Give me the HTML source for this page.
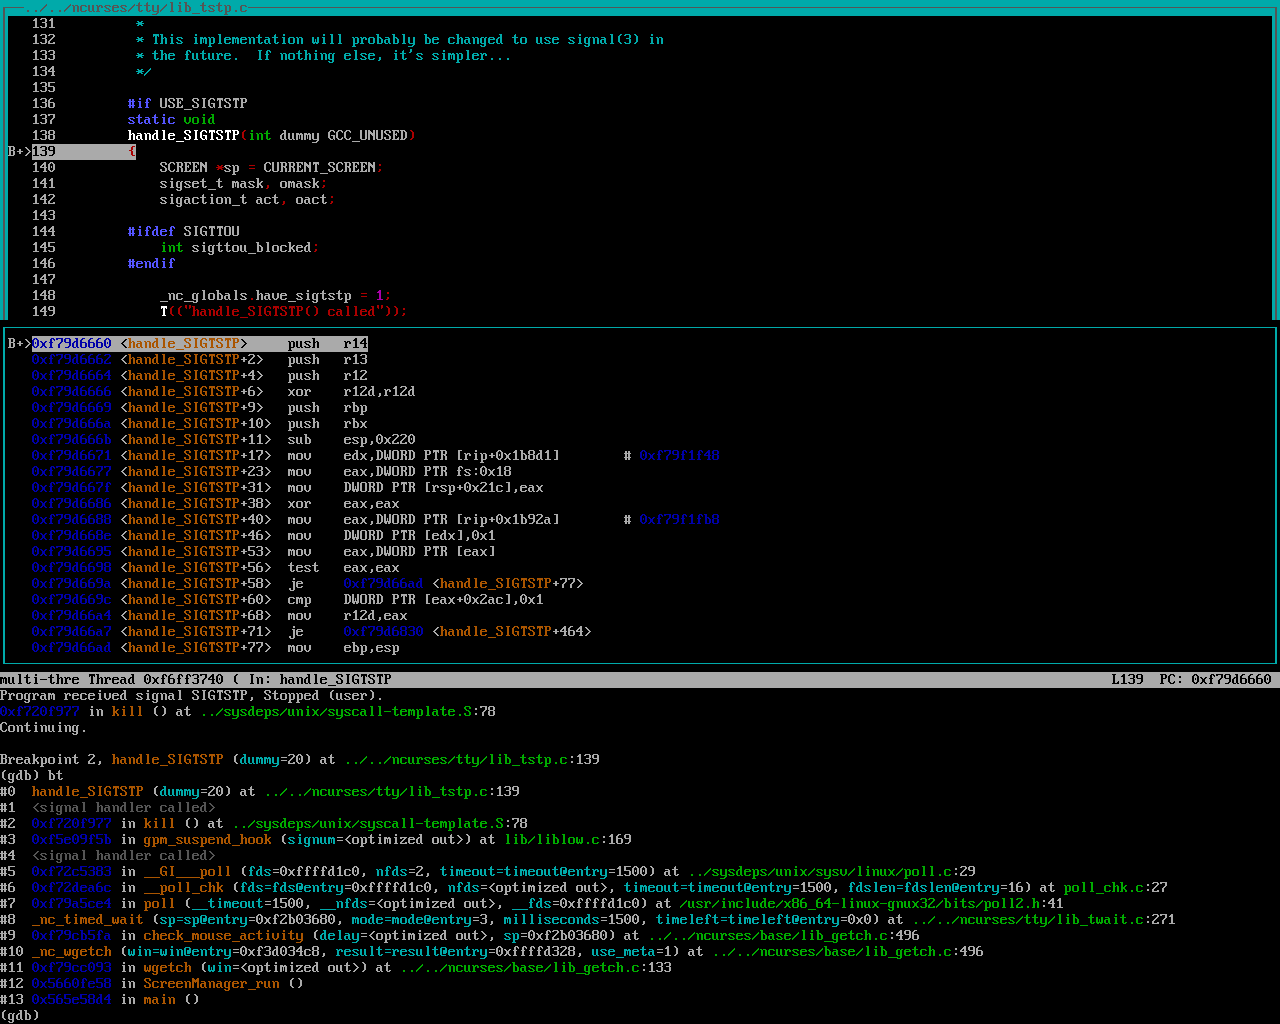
<!DOCTYPE html>
<html lang="en"><head><meta charset="utf-8"><title>gdb TUI - ../../ncurses/tty/lib_tstp.c</title>
<style>
html,body{margin:0;padding:0;background:#000;}
body{width:1280px;height:1024px;overflow:hidden;}
#screen{position:relative;width:1280px;height:1024px;overflow:hidden;background:#000;}
#text{position:absolute;left:0;top:0;margin:0;width:1280px;height:1024px;overflow:hidden;font-family:"Liberation Mono",monospace;font-size:13.333px;line-height:16px;color:#aaa;letter-spacing:0;}
#text div{height:16px;white-space:pre;overflow:hidden;}
#glyphs{position:absolute;left:0;top:0;display:block;}
.fk{color:#000000}.bk{background:#000000}
.fr{color:#aa0000}.br{background:#aa0000}
.fg{color:#00aa00}.bg{background:#00aa00}
.fo{color:#aa5500}.bo{background:#aa5500}
.fb{color:#0000aa}.bb{background:#0000aa}
.fm{color:#aa00aa}.bm{background:#aa00aa}
.fc{color:#00aaaa}.bc{background:#00aaaa}
.fw{color:#aaaaaa}.bw{background:#aaaaaa}
.fK{color:#555555}.bK{background:#555555}
.fR{color:#ff5555}.bR{background:#ff5555}
.fG{color:#55ff55}.bG{background:#55ff55}
.fY{color:#ffff55}.bY{background:#ffff55}
.fB{color:#5555ff}.bB{background:#5555ff}
.fM{color:#ff55ff}.bM{background:#ff55ff}
.fC{color:#55ffff}.bC{background:#55ffff}
.fW{color:#ffffff}.bW{background:#ffffff}
</style></head><body>
<div id="screen">
<div id="text">
<div><span class="fK bc">┌──../../ncurses/tty/lib_tstp.c────────────────────────────────────────────────────────────────────────────────────────────────────────────────────────────────┐</span></div>
<div><span class="fK bc">│</span>   131         <span class="fc"> *</span>                                                                                                                                             <span class="fK bc">│</span></div>
<div><span class="fK bc">│</span>   132         <span class="fc"> * This implementation will probably be changed to use signal(3) in</span>                                                                            <span class="fK bc">│</span></div>
<div><span class="fK bc">│</span>   133         <span class="fc"> * the future.  If nothing else, it's simpler...</span>                                                                                               <span class="fK bc">│</span></div>
<div><span class="fK bc">│</span>   134         <span class="fc"> */</span>                                                                                                                                            <span class="fK bc">│</span></div>
<div><span class="fK bc">│</span>   135                                                                                                                                                        <span class="fK bc">│</span></div>
<div><span class="fK bc">│</span>   136         <span class="fB">#if</span> USE_SIGTSTP                                                                                                                                <span class="fK bc">│</span></div>
<div><span class="fK bc">│</span>   137         <span class="fB">static</span> <span class="fg">void</span>                                                                                                                                    <span class="fK bc">│</span></div>
<div><span class="fK bc">│</span>   138         <span class="fW">handle_SIGTSTP</span><span class="fr">(</span><span class="fg">int</span> dummy GCC_UNUSED<span class="fr">)</span>                                                                                                           <span class="fK bc">│</span></div>
<div><span class="fK bc">│</span>B+&gt;<span class="fk bw">139         </span><span class="fr bw">{</span>                                                                                                                                              <span class="fK bc">│</span></div>
<div><span class="fK bc">│</span>   140             SCREEN <span class="fr">*</span>sp <span class="fr">=</span> CURRENT_SCREEN<span class="fr">;</span>                                                                                                               <span class="fK bc">│</span></div>
<div><span class="fK bc">│</span>   141             sigset_t mask<span class="fr">,</span> omask<span class="fr">;</span>                                                                                                                      <span class="fK bc">│</span></div>
<div><span class="fK bc">│</span>   142             sigaction_t act<span class="fr">,</span> oact<span class="fr">;</span>                                                                                                                     <span class="fK bc">│</span></div>
<div><span class="fK bc">│</span>   143                                                                                                                                                        <span class="fK bc">│</span></div>
<div><span class="fK bc">│</span>   144         <span class="fB">#ifdef</span> SIGTTOU                                                                                                                                 <span class="fK bc">│</span></div>
<div><span class="fK bc">│</span>   145             <span class="fg">int</span> sigttou_blocked<span class="fr">;</span>                                                                                                                       <span class="fK bc">│</span></div>
<div><span class="fK bc">│</span>   146         <span class="fB">#endif</span>                                                                                                                                         <span class="fK bc">│</span></div>
<div><span class="fK bc">│</span>   147                                                                                                                                                        <span class="fK bc">│</span></div>
<div><span class="fK bc">│</span>   148             _nc_globals<span class="fr">.</span>have_sigtstp <span class="fr">=</span> <span class="fm">1</span><span class="fr">;</span>                                                                                                              <span class="fK bc">│</span></div>
<div><span class="fK bc">│</span>   149             <span class="fW">T</span><span class="fr">(("handle_SIGTSTP() called"));</span>                                                                                                            <span class="fK bc">│</span></div>
<div><span class="fc">┌──────────────────────────────────────────────────────────────────────────────────────────────────────────────────────────────────────────────────────────────┐</span></div>
<div><span class="fc">│</span>B+&gt;<span class="fb bw">0xf79d6660</span><span class="fk bw"> &lt;</span><span class="fo bw">handle_SIGTSTP</span><span class="fk bw">&gt;     push   r14</span>                                                                                                                 <span class="fc">│</span></div>
<div><span class="fc">│</span>   <span class="fb">0xf79d6662</span> &lt;<span class="fo">handle_SIGTSTP</span>+2&gt;   push   r13                                                                                                                 <span class="fc">│</span></div>
<div><span class="fc">│</span>   <span class="fb">0xf79d6664</span> &lt;<span class="fo">handle_SIGTSTP</span>+4&gt;   push   r12                                                                                                                 <span class="fc">│</span></div>
<div><span class="fc">│</span>   <span class="fb">0xf79d6666</span> &lt;<span class="fo">handle_SIGTSTP</span>+6&gt;   xor    r12d,r12d                                                                                                           <span class="fc">│</span></div>
<div><span class="fc">│</span>   <span class="fb">0xf79d6669</span> &lt;<span class="fo">handle_SIGTSTP</span>+9&gt;   push   rbp                                                                                                                 <span class="fc">│</span></div>
<div><span class="fc">│</span>   <span class="fb">0xf79d666a</span> &lt;<span class="fo">handle_SIGTSTP</span>+10&gt;  push   rbx                                                                                                                 <span class="fc">│</span></div>
<div><span class="fc">│</span>   <span class="fb">0xf79d666b</span> &lt;<span class="fo">handle_SIGTSTP</span>+11&gt;  sub    esp,0x220                                                                                                           <span class="fc">│</span></div>
<div><span class="fc">│</span>   <span class="fb">0xf79d6671</span> &lt;<span class="fo">handle_SIGTSTP</span>+17&gt;  mov    edx,DWORD PTR [rip+0x1b8d1]        # <span class="fb">0xf79f1f48</span>                                                                     <span class="fc">│</span></div>
<div><span class="fc">│</span>   <span class="fb">0xf79d6677</span> &lt;<span class="fo">handle_SIGTSTP</span>+23&gt;  mov    eax,DWORD PTR fs:0x18                                                                                               <span class="fc">│</span></div>
<div><span class="fc">│</span>   <span class="fb">0xf79d667f</span> &lt;<span class="fo">handle_SIGTSTP</span>+31&gt;  mov    DWORD PTR [rsp+0x21c],eax                                                                                           <span class="fc">│</span></div>
<div><span class="fc">│</span>   <span class="fb">0xf79d6686</span> &lt;<span class="fo">handle_SIGTSTP</span>+38&gt;  xor    eax,eax                                                                                                             <span class="fc">│</span></div>
<div><span class="fc">│</span>   <span class="fb">0xf79d6688</span> &lt;<span class="fo">handle_SIGTSTP</span>+40&gt;  mov    eax,DWORD PTR [rip+0x1b92a]        # <span class="fb">0xf79f1fb8</span>                                                                     <span class="fc">│</span></div>
<div><span class="fc">│</span>   <span class="fb">0xf79d668e</span> &lt;<span class="fo">handle_SIGTSTP</span>+46&gt;  mov    DWORD PTR [edx],0x1                                                                                                 <span class="fc">│</span></div>
<div><span class="fc">│</span>   <span class="fb">0xf79d6695</span> &lt;<span class="fo">handle_SIGTSTP</span>+53&gt;  mov    eax,DWORD PTR [eax]                                                                                                 <span class="fc">│</span></div>
<div><span class="fc">│</span>   <span class="fb">0xf79d6698</span> &lt;<span class="fo">handle_SIGTSTP</span>+56&gt;  test   eax,eax                                                                                                             <span class="fc">│</span></div>
<div><span class="fc">│</span>   <span class="fb">0xf79d669a</span> &lt;<span class="fo">handle_SIGTSTP</span>+58&gt;  je     <span class="fb">0xf79d66ad</span> &lt;<span class="fo">handle_SIGTSTP</span>+77&gt;                                                                                      <span class="fc">│</span></div>
<div><span class="fc">│</span>   <span class="fb">0xf79d669c</span> &lt;<span class="fo">handle_SIGTSTP</span>+60&gt;  cmp    DWORD PTR [eax+0x2ac],0x1                                                                                           <span class="fc">│</span></div>
<div><span class="fc">│</span>   <span class="fb">0xf79d66a4</span> &lt;<span class="fo">handle_SIGTSTP</span>+68&gt;  mov    r12d,eax                                                                                                            <span class="fc">│</span></div>
<div><span class="fc">│</span>   <span class="fb">0xf79d66a7</span> &lt;<span class="fo">handle_SIGTSTP</span>+71&gt;  je     <span class="fb">0xf79d6830</span> &lt;<span class="fo">handle_SIGTSTP</span>+464&gt;                                                                                     <span class="fc">│</span></div>
<div><span class="fc">│</span>   <span class="fb">0xf79d66ad</span> &lt;<span class="fo">handle_SIGTSTP</span>+77&gt;  mov    ebp,esp                                                                                                             <span class="fc">│</span></div>
<div><span class="fc">└──────────────────────────────────────────────────────────────────────────────────────────────────────────────────────────────────────────────────────────────┘</span></div>
<div><span class="fk bw">multi-thre Thread 0xf6ff3740 ( In: handle_SIGTSTP                                                                                          L139  PC: 0xf79d6660 </span></div>
<div>Program received signal SIGTSTP, Stopped (user).</div>
<div><span class="fb">0xf720f977</span> in <span class="fo">kill</span> () at <span class="fg">../sysdeps/unix/syscall-template.S</span>:78</div>
<div>Continuing.</div>
<div></div>
<div>Breakpoint 2, <span class="fo">handle_SIGTSTP</span> (<span class="fc">dummy</span>=20) at <span class="fg">../../ncurses/tty/lib_tstp.c</span>:139</div>
<div>(gdb) bt</div>
<div>#0  <span class="fo">handle_SIGTSTP</span> (<span class="fc">dummy</span>=20) at <span class="fg">../../ncurses/tty/lib_tstp.c</span>:139</div>
<div>#1  <span class="fK">&lt;signal handler called&gt;</span></div>
<div>#2  <span class="fb">0xf720f977</span> in <span class="fo">kill</span> () at <span class="fg">../sysdeps/unix/syscall-template.S</span>:78</div>
<div>#3  <span class="fb">0xf5e09f5b</span> in <span class="fo">gpm_suspend_hook</span> (<span class="fc">signum</span>=&lt;optimized out&gt;) at <span class="fg">lib/liblow.c</span>:169</div>
<div>#4  <span class="fK">&lt;signal handler called&gt;</span></div>
<div>#5  <span class="fb">0xf72c5383</span> in <span class="fo">__GI___poll</span> (<span class="fc">fds</span>=0xffffd1c0, <span class="fc">nfds</span>=2, <span class="fc">timeout=timeout@entry</span>=1500) at <span class="fg">../sysdeps/unix/sysv/linux/poll.c</span>:29</div>
<div>#6  <span class="fb">0xf72dea6c</span> in <span class="fo">__poll_chk</span> (<span class="fc">fds=fds@entry</span>=0xffffd1c0, <span class="fc">nfds</span>=&lt;optimized out&gt;, <span class="fc">timeout=timeout@entry</span>=1500, <span class="fc">fdslen=fdslen@entry</span>=16) at <span class="fg">poll_chk.c</span>:27</div>
<div>#7  <span class="fb">0xf79a5ce4</span> in <span class="fo">poll</span> (<span class="fc">__timeout</span>=1500, <span class="fc">__nfds</span>=&lt;optimized out&gt;, <span class="fc">__fds</span>=0xffffd1c0) at <span class="fg">/usr/include/x86_64-linux-gnux32/bits/poll2.h</span>:41</div>
<div>#8  <span class="fo">_nc_timed_wait</span> (<span class="fc">sp=sp@entry</span>=0xf2b03680, <span class="fc">mode=mode@entry</span>=3, <span class="fc">milliseconds</span>=1500, <span class="fc">timeleft=timeleft@entry</span>=0x0) at <span class="fg">../../ncurses/tty/lib_twait.c</span>:271</div>
<div>#9  <span class="fb">0xf79cb5fa</span> in <span class="fo">check_mouse_activity</span> (<span class="fc">delay</span>=&lt;optimized out&gt;, <span class="fc">sp</span>=0xf2b03680) at <span class="fg">../../ncurses/base/lib_getch.c</span>:496</div>
<div>#10 <span class="fo">_nc_wgetch</span> (<span class="fc">win=win@entry</span>=0xf3d034c8, <span class="fc">result=result@entry</span>=0xffffd328, <span class="fc">use_meta</span>=1) at <span class="fg">../../ncurses/base/lib_getch.c</span>:496</div>
<div>#11 <span class="fb">0xf79cc093</span> in <span class="fo">wgetch</span> (<span class="fc">win</span>=&lt;optimized out&gt;) at <span class="fg">../../ncurses/base/lib_getch.c</span>:133</div>
<div>#12 <span class="fb">0x5660fe58</span> in <span class="fo">ScreenManager_run</span> ()</div>
<div>#13 <span class="fb">0x565e58d4</span> in <span class="fo">main</span> ()</div>
<div>(gdb)</div>
</div>
<svg id="glyphs" width="1280" height="1024" viewBox="0 0 1280 1024" shape-rendering="crispEdges">
<defs>
<path id="g22" d="M1 1h2v1h-2zM5 1h2v1h-2zM1 2h2v1h-2zM5 2h2v1h-2zM1 3h2v1h-2zM5 3h2v1h-2zM2 4h1v1h-1zM5 4h1v1h-1z"/>
<path id="g23" d="M1 3h2v1h-2zM4 3h2v1h-2zM1 4h2v1h-2zM4 4h2v1h-2zM0 5h7v1h-7zM1 6h2v1h-2zM4 6h2v1h-2zM1 7h2v1h-2zM4 7h2v1h-2zM1 8h2v1h-2zM4 8h2v1h-2zM0 9h7v1h-7zM1 10h2v1h-2zM4 10h2v1h-2zM1 11h2v1h-2zM4 11h2v1h-2z"/>
<path id="g27" d="M2 1h2v1h-2zM2 2h2v1h-2zM2 3h2v1h-2zM1 4h2v1h-2z"/>
<path id="g28" d="M4 2h2v1h-2zM3 3h2v1h-2zM2 4h2v1h-2zM2 5h2v1h-2zM2 6h2v1h-2zM2 7h2v1h-2zM2 8h2v1h-2zM2 9h2v1h-2zM3 10h2v1h-2zM4 11h2v1h-2z"/>
<path id="g29" d="M2 2h2v1h-2zM3 3h2v1h-2zM4 4h2v1h-2zM4 5h2v1h-2zM4 6h2v1h-2zM4 7h2v1h-2zM4 8h2v1h-2zM4 9h2v1h-2zM3 10h2v1h-2zM2 11h2v1h-2z"/>
<path id="g2a" d="M1 5h2v1h-2zM5 5h2v1h-2zM2 6h4v1h-4zM0 7h8v1h-8zM2 8h4v1h-4zM1 9h2v1h-2zM5 9h2v1h-2z"/>
<path id="g2b" d="M3 5h2v1h-2zM3 6h2v1h-2zM1 7h6v1h-6zM3 8h2v1h-2zM3 9h2v1h-2z"/>
<path id="g2c" d="M3 9h2v1h-2zM3 10h2v1h-2zM3 11h2v1h-2zM2 12h2v1h-2z"/>
<path id="g2d" d="M0 7h7v1h-7z"/>
<path id="g2e" d="M3 10h2v1h-2zM3 11h2v1h-2z"/>
<path id="g2f" d="M6 4h1v1h-1zM5 5h2v1h-2zM4 6h2v1h-2zM3 7h2v1h-2zM2 8h2v1h-2zM1 9h2v1h-2zM0 10h2v1h-2zM0 11h1v1h-1z"/>
<path id="g30" d="M2 2h3v1h-3zM1 3h2v1h-2zM4 3h2v1h-2zM0 4h2v1h-2zM5 4h2v1h-2zM0 5h2v1h-2zM5 5h2v1h-2zM0 6h2v1h-2zM3 6h1v1h-1zM5 6h2v1h-2zM0 7h2v1h-2zM3 7h1v1h-1zM5 7h2v1h-2zM0 8h2v1h-2zM5 8h2v1h-2zM0 9h2v1h-2zM5 9h2v1h-2zM1 10h2v1h-2zM4 10h2v1h-2zM2 11h3v1h-3z"/>
<path id="g31" d="M3 2h2v1h-2zM2 3h3v1h-3zM1 4h4v1h-4zM3 5h2v1h-2zM3 6h2v1h-2zM3 7h2v1h-2zM3 8h2v1h-2zM3 9h2v1h-2zM3 10h2v1h-2zM1 11h6v1h-6z"/>
<path id="g32" d="M1 2h5v1h-5zM0 3h2v1h-2zM5 3h2v1h-2zM5 4h2v1h-2zM4 5h2v1h-2zM3 6h2v1h-2zM2 7h2v1h-2zM1 8h2v1h-2zM0 9h2v1h-2zM0 10h2v1h-2zM5 10h2v1h-2zM0 11h7v1h-7z"/>
<path id="g33" d="M1 2h5v1h-5zM0 3h2v1h-2zM5 3h2v1h-2zM5 4h2v1h-2zM5 5h2v1h-2zM2 6h4v1h-4zM5 7h2v1h-2zM5 8h2v1h-2zM5 9h2v1h-2zM0 10h2v1h-2zM5 10h2v1h-2zM1 11h5v1h-5z"/>
<path id="g34" d="M4 2h2v1h-2zM3 3h3v1h-3zM2 4h4v1h-4zM1 5h2v1h-2zM4 5h2v1h-2zM0 6h2v1h-2zM4 6h2v1h-2zM0 7h7v1h-7zM4 8h2v1h-2zM4 9h2v1h-2zM4 10h2v1h-2zM3 11h4v1h-4z"/>
<path id="g35" d="M0 2h7v1h-7zM0 3h2v1h-2zM0 4h2v1h-2zM0 5h2v1h-2zM0 6h6v1h-6zM5 7h2v1h-2zM5 8h2v1h-2zM5 9h2v1h-2zM0 10h2v1h-2zM5 10h2v1h-2zM1 11h5v1h-5z"/>
<path id="g36" d="M2 2h3v1h-3zM1 3h2v1h-2zM0 4h2v1h-2zM0 5h2v1h-2zM0 6h6v1h-6zM0 7h2v1h-2zM5 7h2v1h-2zM0 8h2v1h-2zM5 8h2v1h-2zM0 9h2v1h-2zM5 9h2v1h-2zM0 10h2v1h-2zM5 10h2v1h-2zM1 11h5v1h-5z"/>
<path id="g37" d="M0 2h7v1h-7zM0 3h2v1h-2zM5 3h2v1h-2zM5 4h2v1h-2zM5 5h2v1h-2zM4 6h2v1h-2zM3 7h2v1h-2zM2 8h2v1h-2zM2 9h2v1h-2zM2 10h2v1h-2zM2 11h2v1h-2z"/>
<path id="g38" d="M1 2h5v1h-5zM0 3h2v1h-2zM5 3h2v1h-2zM0 4h2v1h-2zM5 4h2v1h-2zM0 5h2v1h-2zM5 5h2v1h-2zM1 6h5v1h-5zM0 7h2v1h-2zM5 7h2v1h-2zM0 8h2v1h-2zM5 8h2v1h-2zM0 9h2v1h-2zM5 9h2v1h-2zM0 10h2v1h-2zM5 10h2v1h-2zM1 11h5v1h-5z"/>
<path id="g39" d="M1 2h5v1h-5zM0 3h2v1h-2zM5 3h2v1h-2zM0 4h2v1h-2zM5 4h2v1h-2zM0 5h2v1h-2zM5 5h2v1h-2zM1 6h6v1h-6zM5 7h2v1h-2zM5 8h2v1h-2zM5 9h2v1h-2zM4 10h2v1h-2zM1 11h4v1h-4z"/>
<path id="g3a" d="M3 4h2v1h-2zM3 5h2v1h-2zM3 9h2v1h-2zM3 10h2v1h-2z"/>
<path id="g3b" d="M3 4h2v1h-2zM3 5h2v1h-2zM3 9h2v1h-2zM3 10h2v1h-2zM2 11h2v1h-2z"/>
<path id="g3c" d="M5 3h2v1h-2zM4 4h2v1h-2zM3 5h2v1h-2zM2 6h2v1h-2zM1 7h2v1h-2zM2 8h2v1h-2zM3 9h2v1h-2zM4 10h2v1h-2zM5 11h2v1h-2z"/>
<path id="g3d" d="M1 5h6v1h-6zM1 8h6v1h-6z"/>
<path id="g3e" d="M1 3h2v1h-2zM2 4h2v1h-2zM3 5h2v1h-2zM4 6h2v1h-2zM5 7h2v1h-2zM4 8h2v1h-2zM3 9h2v1h-2zM2 10h2v1h-2zM1 11h2v1h-2z"/>
<path id="g40" d="M1 3h5v1h-5zM0 4h2v1h-2zM5 4h2v1h-2zM0 5h2v1h-2zM5 5h2v1h-2zM0 6h2v1h-2zM3 6h4v1h-4zM0 7h2v1h-2zM3 7h4v1h-4zM0 8h2v1h-2zM3 8h4v1h-4zM0 9h2v1h-2zM3 9h3v1h-3zM0 10h2v1h-2zM1 11h5v1h-5z"/>
<path id="g42" d="M0 2h6v1h-6zM1 3h2v1h-2zM5 3h2v1h-2zM1 4h2v1h-2zM5 4h2v1h-2zM1 5h2v1h-2zM5 5h2v1h-2zM1 6h5v1h-5zM1 7h2v1h-2zM5 7h2v1h-2zM1 8h2v1h-2zM5 8h2v1h-2zM1 9h2v1h-2zM5 9h2v1h-2zM1 10h2v1h-2zM5 10h2v1h-2zM0 11h6v1h-6z"/>
<path id="g43" d="M2 2h4v1h-4zM1 3h2v1h-2zM5 3h2v1h-2zM0 4h2v1h-2zM6 4h1v1h-1zM0 5h2v1h-2zM0 6h2v1h-2zM0 7h2v1h-2zM0 8h2v1h-2zM0 9h2v1h-2zM6 9h1v1h-1zM1 10h2v1h-2zM5 10h2v1h-2zM2 11h4v1h-4z"/>
<path id="g44" d="M0 2h5v1h-5zM1 3h2v1h-2zM4 3h2v1h-2zM1 4h2v1h-2zM5 4h2v1h-2zM1 5h2v1h-2zM5 5h2v1h-2zM1 6h2v1h-2zM5 6h2v1h-2zM1 7h2v1h-2zM5 7h2v1h-2zM1 8h2v1h-2zM5 8h2v1h-2zM1 9h2v1h-2zM5 9h2v1h-2zM1 10h2v1h-2zM4 10h2v1h-2zM0 11h5v1h-5z"/>
<path id="g45" d="M0 2h7v1h-7zM1 3h2v1h-2zM5 3h2v1h-2zM1 4h2v1h-2zM6 4h1v1h-1zM1 5h2v1h-2zM4 5h1v1h-1zM1 6h4v1h-4zM1 7h2v1h-2zM4 7h1v1h-1zM1 8h2v1h-2zM1 9h2v1h-2zM6 9h1v1h-1zM1 10h2v1h-2zM5 10h2v1h-2zM0 11h7v1h-7z"/>
<path id="g47" d="M2 2h4v1h-4zM1 3h2v1h-2zM5 3h2v1h-2zM0 4h2v1h-2zM6 4h1v1h-1zM0 5h2v1h-2zM0 6h2v1h-2zM0 7h2v1h-2zM3 7h4v1h-4zM0 8h2v1h-2zM5 8h2v1h-2zM0 9h2v1h-2zM5 9h2v1h-2zM1 10h2v1h-2zM5 10h2v1h-2zM2 11h3v1h-3zM6 11h1v1h-1z"/>
<path id="g49" d="M2 2h4v1h-4zM3 3h2v1h-2zM3 4h2v1h-2zM3 5h2v1h-2zM3 6h2v1h-2zM3 7h2v1h-2zM3 8h2v1h-2zM3 9h2v1h-2zM3 10h2v1h-2zM2 11h4v1h-4z"/>
<path id="g4c" d="M0 2h4v1h-4zM1 3h2v1h-2zM1 4h2v1h-2zM1 5h2v1h-2zM1 6h2v1h-2zM1 7h2v1h-2zM1 8h2v1h-2zM1 9h2v1h-2zM6 9h1v1h-1zM1 10h2v1h-2zM5 10h2v1h-2zM0 11h7v1h-7z"/>
<path id="g4d" d="M0 2h2v1h-2zM5 2h2v1h-2zM0 3h3v1h-3zM4 3h3v1h-3zM0 4h7v1h-7zM0 5h7v1h-7zM0 6h2v1h-2zM3 6h1v1h-1zM5 6h2v1h-2zM0 7h2v1h-2zM5 7h2v1h-2zM0 8h2v1h-2zM5 8h2v1h-2zM0 9h2v1h-2zM5 9h2v1h-2zM0 10h2v1h-2zM5 10h2v1h-2zM0 11h2v1h-2zM5 11h2v1h-2z"/>
<path id="g4e" d="M0 2h2v1h-2zM5 2h2v1h-2zM0 3h3v1h-3zM5 3h2v1h-2zM0 4h4v1h-4zM5 4h2v1h-2zM0 5h7v1h-7zM0 6h2v1h-2zM3 6h4v1h-4zM0 7h2v1h-2zM4 7h3v1h-3zM0 8h2v1h-2zM5 8h2v1h-2zM0 9h2v1h-2zM5 9h2v1h-2zM0 10h2v1h-2zM5 10h2v1h-2zM0 11h2v1h-2zM5 11h2v1h-2z"/>
<path id="g4f" d="M1 2h5v1h-5zM0 3h2v1h-2zM5 3h2v1h-2zM0 4h2v1h-2zM5 4h2v1h-2zM0 5h2v1h-2zM5 5h2v1h-2zM0 6h2v1h-2zM5 6h2v1h-2zM0 7h2v1h-2zM5 7h2v1h-2zM0 8h2v1h-2zM5 8h2v1h-2zM0 9h2v1h-2zM5 9h2v1h-2zM0 10h2v1h-2zM5 10h2v1h-2zM1 11h5v1h-5z"/>
<path id="g50" d="M0 2h6v1h-6zM1 3h2v1h-2zM5 3h2v1h-2zM1 4h2v1h-2zM5 4h2v1h-2zM1 5h2v1h-2zM5 5h2v1h-2zM1 6h5v1h-5zM1 7h2v1h-2zM1 8h2v1h-2zM1 9h2v1h-2zM1 10h2v1h-2zM0 11h4v1h-4z"/>
<path id="g52" d="M0 2h6v1h-6zM1 3h2v1h-2zM5 3h2v1h-2zM1 4h2v1h-2zM5 4h2v1h-2zM1 5h2v1h-2zM5 5h2v1h-2zM1 6h5v1h-5zM1 7h2v1h-2zM4 7h2v1h-2zM1 8h2v1h-2zM5 8h2v1h-2zM1 9h2v1h-2zM5 9h2v1h-2zM1 10h2v1h-2zM5 10h2v1h-2zM0 11h3v1h-3zM5 11h2v1h-2z"/>
<path id="g53" d="M1 2h5v1h-5zM0 3h2v1h-2zM5 3h2v1h-2zM0 4h2v1h-2zM5 4h2v1h-2zM1 5h2v1h-2zM2 6h3v1h-3zM4 7h2v1h-2zM5 8h2v1h-2zM0 9h2v1h-2zM5 9h2v1h-2zM0 10h2v1h-2zM5 10h2v1h-2zM1 11h5v1h-5z"/>
<path id="g54" d="M1 2h6v1h-6zM1 3h6v1h-6zM1 4h1v1h-1zM3 4h2v1h-2zM6 4h1v1h-1zM3 5h2v1h-2zM3 6h2v1h-2zM3 7h2v1h-2zM3 8h2v1h-2zM3 9h2v1h-2zM3 10h2v1h-2zM2 11h4v1h-4z"/>
<path id="g55" d="M0 2h2v1h-2zM5 2h2v1h-2zM0 3h2v1h-2zM5 3h2v1h-2zM0 4h2v1h-2zM5 4h2v1h-2zM0 5h2v1h-2zM5 5h2v1h-2zM0 6h2v1h-2zM5 6h2v1h-2zM0 7h2v1h-2zM5 7h2v1h-2zM0 8h2v1h-2zM5 8h2v1h-2zM0 9h2v1h-2zM5 9h2v1h-2zM0 10h2v1h-2zM5 10h2v1h-2zM1 11h5v1h-5z"/>
<path id="g57" d="M0 2h2v1h-2zM5 2h2v1h-2zM0 3h2v1h-2zM5 3h2v1h-2zM0 4h2v1h-2zM5 4h2v1h-2zM0 5h2v1h-2zM5 5h2v1h-2zM0 6h2v1h-2zM3 6h1v1h-1zM5 6h2v1h-2zM0 7h2v1h-2zM3 7h1v1h-1zM5 7h2v1h-2zM0 8h2v1h-2zM3 8h1v1h-1zM5 8h2v1h-2zM0 9h7v1h-7zM0 10h3v1h-3zM4 10h3v1h-3zM1 11h2v1h-2zM4 11h2v1h-2z"/>
<path id="g5b" d="M2 2h4v1h-4zM2 3h2v1h-2zM2 4h2v1h-2zM2 5h2v1h-2zM2 6h2v1h-2zM2 7h2v1h-2zM2 8h2v1h-2zM2 9h2v1h-2zM2 10h2v1h-2zM2 11h4v1h-4z"/>
<path id="g5d" d="M2 2h4v1h-4zM4 3h2v1h-2zM4 4h2v1h-2zM4 5h2v1h-2zM4 6h2v1h-2zM4 7h2v1h-2zM4 8h2v1h-2zM4 9h2v1h-2zM4 10h2v1h-2zM2 11h4v1h-4z"/>
<path id="g5f" d="M0 13h8v1h-8z"/>
<path id="g61" d="M1 5h4v1h-4zM4 6h2v1h-2zM1 7h5v1h-5zM0 8h2v1h-2zM4 8h2v1h-2zM0 9h2v1h-2zM4 9h2v1h-2zM0 10h2v1h-2zM4 10h2v1h-2zM1 11h3v1h-3zM5 11h2v1h-2z"/>
<path id="g62" d="M0 2h3v1h-3zM1 3h2v1h-2zM1 4h2v1h-2zM1 5h4v1h-4zM1 6h2v1h-2zM4 6h2v1h-2zM1 7h2v1h-2zM5 7h2v1h-2zM1 8h2v1h-2zM5 8h2v1h-2zM1 9h2v1h-2zM5 9h2v1h-2zM1 10h2v1h-2zM5 10h2v1h-2zM1 11h5v1h-5z"/>
<path id="g63" d="M1 5h5v1h-5zM0 6h2v1h-2zM5 6h2v1h-2zM0 7h2v1h-2zM0 8h2v1h-2zM0 9h2v1h-2zM0 10h2v1h-2zM5 10h2v1h-2zM1 11h5v1h-5z"/>
<path id="g64" d="M3 2h3v1h-3zM4 3h2v1h-2zM4 4h2v1h-2zM2 5h4v1h-4zM1 6h2v1h-2zM4 6h2v1h-2zM0 7h2v1h-2zM4 7h2v1h-2zM0 8h2v1h-2zM4 8h2v1h-2zM0 9h2v1h-2zM4 9h2v1h-2zM0 10h2v1h-2zM4 10h2v1h-2zM1 11h3v1h-3zM5 11h2v1h-2z"/>
<path id="g65" d="M1 5h5v1h-5zM0 6h2v1h-2zM5 6h2v1h-2zM0 7h7v1h-7zM0 8h2v1h-2zM0 9h2v1h-2zM0 10h2v1h-2zM5 10h2v1h-2zM1 11h5v1h-5z"/>
<path id="g66" d="M3 2h3v1h-3zM2 3h2v1h-2zM5 3h2v1h-2zM2 4h2v1h-2zM6 4h1v1h-1zM2 5h2v1h-2zM1 6h4v1h-4zM2 7h2v1h-2zM2 8h2v1h-2zM2 9h2v1h-2zM2 10h2v1h-2zM1 11h4v1h-4z"/>
<path id="g67" d="M1 5h3v1h-3zM5 5h2v1h-2zM0 6h2v1h-2zM4 6h2v1h-2zM0 7h2v1h-2zM4 7h2v1h-2zM0 8h2v1h-2zM4 8h2v1h-2zM0 9h2v1h-2zM4 9h2v1h-2zM0 10h2v1h-2zM4 10h2v1h-2zM1 11h5v1h-5zM4 12h2v1h-2zM0 13h2v1h-2zM4 13h2v1h-2zM1 14h4v1h-4z"/>
<path id="g68" d="M0 2h3v1h-3zM1 3h2v1h-2zM1 4h2v1h-2zM1 5h2v1h-2zM4 5h2v1h-2zM1 6h3v1h-3zM5 6h2v1h-2zM1 7h2v1h-2zM5 7h2v1h-2zM1 8h2v1h-2zM5 8h2v1h-2zM1 9h2v1h-2zM5 9h2v1h-2zM1 10h2v1h-2zM5 10h2v1h-2zM0 11h3v1h-3zM5 11h2v1h-2z"/>
<path id="g69" d="M3 2h2v1h-2zM3 3h2v1h-2zM2 5h3v1h-3zM3 6h2v1h-2zM3 7h2v1h-2zM3 8h2v1h-2zM3 9h2v1h-2zM3 10h2v1h-2zM2 11h4v1h-4z"/>
<path id="g6a" d="M5 2h2v1h-2zM5 3h2v1h-2zM4 5h3v1h-3zM5 6h2v1h-2zM5 7h2v1h-2zM5 8h2v1h-2zM5 9h2v1h-2zM5 10h2v1h-2zM5 11h2v1h-2zM1 12h2v1h-2zM5 12h2v1h-2zM1 13h2v1h-2zM5 13h2v1h-2zM2 14h4v1h-4z"/>
<path id="g6b" d="M0 2h3v1h-3zM1 3h2v1h-2zM1 4h2v1h-2zM1 5h2v1h-2zM5 5h2v1h-2zM1 6h2v1h-2zM4 6h2v1h-2zM1 7h4v1h-4zM1 8h4v1h-4zM1 9h2v1h-2zM4 9h2v1h-2zM1 10h2v1h-2zM5 10h2v1h-2zM0 11h3v1h-3zM5 11h2v1h-2z"/>
<path id="g6c" d="M2 2h3v1h-3zM3 3h2v1h-2zM3 4h2v1h-2zM3 5h2v1h-2zM3 6h2v1h-2zM3 7h2v1h-2zM3 8h2v1h-2zM3 9h2v1h-2zM3 10h2v1h-2zM2 11h4v1h-4z"/>
<path id="g6d" d="M0 5h3v1h-3zM4 5h2v1h-2zM0 6h7v1h-7zM0 7h2v1h-2zM3 7h1v1h-1zM5 7h2v1h-2zM0 8h2v1h-2zM3 8h1v1h-1zM5 8h2v1h-2zM0 9h2v1h-2zM3 9h1v1h-1zM5 9h2v1h-2zM0 10h2v1h-2zM3 10h1v1h-1zM5 10h2v1h-2zM0 11h2v1h-2zM5 11h2v1h-2z"/>
<path id="g6e" d="M0 5h2v1h-2zM3 5h3v1h-3zM1 6h2v1h-2zM5 6h2v1h-2zM1 7h2v1h-2zM5 7h2v1h-2zM1 8h2v1h-2zM5 8h2v1h-2zM1 9h2v1h-2zM5 9h2v1h-2zM1 10h2v1h-2zM5 10h2v1h-2zM1 11h2v1h-2zM5 11h2v1h-2z"/>
<path id="g6f" d="M1 5h5v1h-5zM0 6h2v1h-2zM5 6h2v1h-2zM0 7h2v1h-2zM5 7h2v1h-2zM0 8h2v1h-2zM5 8h2v1h-2zM0 9h2v1h-2zM5 9h2v1h-2zM0 10h2v1h-2zM5 10h2v1h-2zM1 11h5v1h-5z"/>
<path id="g70" d="M0 5h2v1h-2zM3 5h3v1h-3zM1 6h2v1h-2zM5 6h2v1h-2zM1 7h2v1h-2zM5 7h2v1h-2zM1 8h2v1h-2zM5 8h2v1h-2zM1 9h2v1h-2zM5 9h2v1h-2zM1 10h2v1h-2zM5 10h2v1h-2zM1 11h5v1h-5zM1 12h2v1h-2zM1 13h2v1h-2zM0 14h4v1h-4z"/>
<path id="g72" d="M0 5h2v1h-2zM3 5h3v1h-3zM1 6h3v1h-3zM5 6h2v1h-2zM1 7h2v1h-2zM5 7h2v1h-2zM1 8h2v1h-2zM1 9h2v1h-2zM1 10h2v1h-2zM0 11h4v1h-4z"/>
<path id="g73" d="M1 5h5v1h-5zM0 6h2v1h-2zM5 6h2v1h-2zM1 7h2v1h-2zM2 8h3v1h-3zM4 9h2v1h-2zM0 10h2v1h-2zM5 10h2v1h-2zM1 11h5v1h-5z"/>
<path id="g74" d="M3 2h1v1h-1zM2 3h2v1h-2zM2 4h2v1h-2zM0 5h6v1h-6zM2 6h2v1h-2zM2 7h2v1h-2zM2 8h2v1h-2zM2 9h2v1h-2zM2 10h2v1h-2zM5 10h2v1h-2zM3 11h3v1h-3z"/>
<path id="g75" d="M0 5h2v1h-2zM4 5h2v1h-2zM0 6h2v1h-2zM4 6h2v1h-2zM0 7h2v1h-2zM4 7h2v1h-2zM0 8h2v1h-2zM4 8h2v1h-2zM0 9h2v1h-2zM4 9h2v1h-2zM0 10h2v1h-2zM4 10h2v1h-2zM1 11h3v1h-3zM5 11h2v1h-2z"/>
<path id="g76" d="M0 5h2v1h-2zM5 5h2v1h-2zM0 6h2v1h-2zM5 6h2v1h-2zM0 7h2v1h-2zM5 7h2v1h-2zM0 8h2v1h-2zM5 8h2v1h-2zM0 9h2v1h-2zM5 9h2v1h-2zM1 10h2v1h-2zM4 10h2v1h-2zM2 11h3v1h-3z"/>
<path id="g77" d="M0 5h2v1h-2zM5 5h2v1h-2zM0 6h2v1h-2zM5 6h2v1h-2zM0 7h2v1h-2zM3 7h1v1h-1zM5 7h2v1h-2zM0 8h2v1h-2zM3 8h1v1h-1zM5 8h2v1h-2zM0 9h2v1h-2zM3 9h1v1h-1zM5 9h2v1h-2zM0 10h7v1h-7zM1 11h2v1h-2zM4 11h2v1h-2z"/>
<path id="g78" d="M0 5h2v1h-2zM5 5h2v1h-2zM1 6h2v1h-2zM4 6h2v1h-2zM2 7h3v1h-3zM2 8h3v1h-3zM2 9h3v1h-3zM1 10h2v1h-2zM4 10h2v1h-2zM0 11h2v1h-2zM5 11h2v1h-2z"/>
<path id="g79" d="M0 5h2v1h-2zM5 5h2v1h-2zM0 6h2v1h-2zM5 6h2v1h-2zM0 7h2v1h-2zM5 7h2v1h-2zM0 8h2v1h-2zM5 8h2v1h-2zM0 9h2v1h-2zM5 9h2v1h-2zM0 10h2v1h-2zM5 10h2v1h-2zM1 11h6v1h-6zM5 12h2v1h-2zM4 13h2v1h-2zM0 14h5v1h-5z"/>
<path id="g7a" d="M0 5h7v1h-7zM0 6h2v1h-2zM4 6h2v1h-2zM3 7h2v1h-2zM2 8h2v1h-2zM1 9h2v1h-2zM0 10h2v1h-2zM5 10h2v1h-2zM0 11h7v1h-7z"/>
<path id="g7b" d="M4 2h3v1h-3zM3 3h2v1h-2zM3 4h2v1h-2zM3 5h2v1h-2zM1 6h3v1h-3zM3 7h2v1h-2zM3 8h2v1h-2zM3 9h2v1h-2zM3 10h2v1h-2zM4 11h3v1h-3z"/>
<path id="gb3" d="M3 0h2v1h-2zM3 1h2v1h-2zM3 2h2v1h-2zM3 3h2v1h-2zM3 4h2v1h-2zM3 5h2v1h-2zM3 6h2v1h-2zM3 7h2v1h-2zM3 8h2v1h-2zM3 9h2v1h-2zM3 10h2v1h-2zM3 11h2v1h-2zM3 12h2v1h-2zM3 13h2v1h-2zM3 14h2v1h-2zM3 15h2v1h-2z"/>
<path id="gbf" d="M0 7h5v1h-5zM3 8h2v1h-2zM3 9h2v1h-2zM3 10h2v1h-2zM3 11h2v1h-2zM3 12h2v1h-2zM3 13h2v1h-2zM3 14h2v1h-2zM3 15h2v1h-2z"/>
<path id="gc0" d="M3 0h2v1h-2zM3 1h2v1h-2zM3 2h2v1h-2zM3 3h2v1h-2zM3 4h2v1h-2zM3 5h2v1h-2zM3 6h2v1h-2zM3 7h5v1h-5z"/>
<path id="gc4" d="M0 7h8v1h-8z"/>
<path id="gd9" d="M3 0h2v1h-2zM3 1h2v1h-2zM3 2h2v1h-2zM3 3h2v1h-2zM3 4h2v1h-2zM3 5h2v1h-2zM3 6h2v1h-2zM0 7h5v1h-5z"/>
<path id="gda" d="M3 7h5v1h-5zM3 8h2v1h-2zM3 9h2v1h-2zM3 10h2v1h-2zM3 11h2v1h-2zM3 12h2v1h-2zM3 13h2v1h-2zM3 14h2v1h-2zM3 15h2v1h-2z"/>
</defs>
<rect width="1280" height="1024" fill="#000"/>
<path fill="#00aaaa" d="M0 0h1280v16h-1280zM0 16h8v304h-8zM1272 16h8v304h-8z"/>
<path fill="#aaaaaa" d="M32 144h104v16h-104zM32 336h336v16h-336zM0 672h1280v16h-1280z"/>
<g fill="#555555">
<use href="#gda" x="0" y="0"/><use href="#gc4" x="8" y="0"/><use href="#gc4" x="16" y="0"/><use href="#g2e" x="24" y="0"/><use href="#g2e" x="32" y="0"/><use href="#g2f" x="40" y="0"/><use href="#g2e" x="48" y="0"/><use href="#g2e" x="56" y="0"/><use href="#g2f" x="64" y="0"/><use href="#g6e" x="72" y="0"/><use href="#g63" x="80" y="0"/><use href="#g75" x="88" y="0"/><use href="#g72" x="96" y="0"/><use href="#g73" x="104" y="0"/><use href="#g65" x="112" y="0"/><use href="#g73" x="120" y="0"/><use href="#g2f" x="128" y="0"/><use href="#g74" x="136" y="0"/><use href="#g74" x="144" y="0"/><use href="#g79" x="152" y="0"/><use href="#g2f" x="160" y="0"/><use href="#g6c" x="168" y="0"/><use href="#g69" x="176" y="0"/><use href="#g62" x="184" y="0"/><use href="#g5f" x="192" y="0"/><use href="#g74" x="200" y="0"/><use href="#g73" x="208" y="0"/><use href="#g74" x="216" y="0"/><use href="#g70" x="224" y="0"/><use href="#g2e" x="232" y="0"/><use href="#g63" x="240" y="0"/><use href="#gc4" x="248" y="0"/><use href="#gc4" x="256" y="0"/><use href="#gc4" x="264" y="0"/><use href="#gc4" x="272" y="0"/><use href="#gc4" x="280" y="0"/><use href="#gc4" x="288" y="0"/><use href="#gc4" x="296" y="0"/><use href="#gc4" x="304" y="0"/><use href="#gc4" x="312" y="0"/><use href="#gc4" x="320" y="0"/><use href="#gc4" x="328" y="0"/><use href="#gc4" x="336" y="0"/><use href="#gc4" x="344" y="0"/><use href="#gc4" x="352" y="0"/><use href="#gc4" x="360" y="0"/><use href="#gc4" x="368" y="0"/><use href="#gc4" x="376" y="0"/><use href="#gc4" x="384" y="0"/><use href="#gc4" x="392" y="0"/><use href="#gc4" x="400" y="0"/><use href="#gc4" x="408" y="0"/><use href="#gc4" x="416" y="0"/><use href="#gc4" x="424" y="0"/><use href="#gc4" x="432" y="0"/><use href="#gc4" x="440" y="0"/><use href="#gc4" x="448" y="0"/><use href="#gc4" x="456" y="0"/><use href="#gc4" x="464" y="0"/><use href="#gc4" x="472" y="0"/><use href="#gc4" x="480" y="0"/><use href="#gc4" x="488" y="0"/><use href="#gc4" x="496" y="0"/><use href="#gc4" x="504" y="0"/><use href="#gc4" x="512" y="0"/><use href="#gc4" x="520" y="0"/><use href="#gc4" x="528" y="0"/><use href="#gc4" x="536" y="0"/><use href="#gc4" x="544" y="0"/><use href="#gc4" x="552" y="0"/><use href="#gc4" x="560" y="0"/><use href="#gc4" x="568" y="0"/><use href="#gc4" x="576" y="0"/><use href="#gc4" x="584" y="0"/><use href="#gc4" x="592" y="0"/><use href="#gc4" x="600" y="0"/><use href="#gc4" x="608" y="0"/><use href="#gc4" x="616" y="0"/><use href="#gc4" x="624" y="0"/><use href="#gc4" x="632" y="0"/><use href="#gc4" x="640" y="0"/><use href="#gc4" x="648" y="0"/><use href="#gc4" x="656" y="0"/><use href="#gc4" x="664" y="0"/><use href="#gc4" x="672" y="0"/><use href="#gc4" x="680" y="0"/><use href="#gc4" x="688" y="0"/><use href="#gc4" x="696" y="0"/><use href="#gc4" x="704" y="0"/><use href="#gc4" x="712" y="0"/><use href="#gc4" x="720" y="0"/><use href="#gc4" x="728" y="0"/><use href="#gc4" x="736" y="0"/><use href="#gc4" x="744" y="0"/><use href="#gc4" x="752" y="0"/><use href="#gc4" x="760" y="0"/><use href="#gc4" x="768" y="0"/><use href="#gc4" x="776" y="0"/><use href="#gc4" x="784" y="0"/><use href="#gc4" x="792" y="0"/><use href="#gc4" x="800" y="0"/><use href="#gc4" x="808" y="0"/><use href="#gc4" x="816" y="0"/><use href="#gc4" x="824" y="0"/><use href="#gc4" x="832" y="0"/><use href="#gc4" x="840" y="0"/><use href="#gc4" x="848" y="0"/><use href="#gc4" x="856" y="0"/><use href="#gc4" x="864" y="0"/><use href="#gc4" x="872" y="0"/><use href="#gc4" x="880" y="0"/><use href="#gc4" x="888" y="0"/><use href="#gc4" x="896" y="0"/><use href="#gc4" x="904" y="0"/><use href="#gc4" x="912" y="0"/><use href="#gc4" x="920" y="0"/><use href="#gc4" x="928" y="0"/><use href="#gc4" x="936" y="0"/><use href="#gc4" x="944" y="0"/><use href="#gc4" x="952" y="0"/><use href="#gc4" x="960" y="0"/><use href="#gc4" x="968" y="0"/><use href="#gc4" x="976" y="0"/><use href="#gc4" x="984" y="0"/><use href="#gc4" x="992" y="0"/><use href="#gc4" x="1000" y="0"/><use href="#gc4" x="1008" y="0"/><use href="#gc4" x="1016" y="0"/><use href="#gc4" x="1024" y="0"/><use href="#gc4" x="1032" y="0"/><use href="#gc4" x="1040" y="0"/><use href="#gc4" x="1048" y="0"/><use href="#gc4" x="1056" y="0"/><use href="#gc4" x="1064" y="0"/><use href="#gc4" x="1072" y="0"/><use href="#gc4" x="1080" y="0"/><use href="#gc4" x="1088" y="0"/><use href="#gc4" x="1096" y="0"/><use href="#gc4" x="1104" y="0"/><use href="#gc4" x="1112" y="0"/><use href="#gc4" x="1120" y="0"/><use href="#gc4" x="1128" y="0"/><use href="#gc4" x="1136" y="0"/><use href="#gc4" x="1144" y="0"/><use href="#gc4" x="1152" y="0"/><use href="#gc4" x="1160" y="0"/><use href="#gc4" x="1168" y="0"/><use href="#gc4" x="1176" y="0"/><use href="#gc4" x="1184" y="0"/><use href="#gc4" x="1192" y="0"/><use href="#gc4" x="1200" y="0"/><use href="#gc4" x="1208" y="0"/><use href="#gc4" x="1216" y="0"/><use href="#gc4" x="1224" y="0"/><use href="#gc4" x="1232" y="0"/><use href="#gc4" x="1240" y="0"/><use href="#gc4" x="1248" y="0"/><use href="#gc4" x="1256" y="0"/><use href="#gc4" x="1264" y="0"/><use href="#gbf" x="1272" y="0"/>
<use href="#gb3" x="0" y="16"/><use href="#gb3" x="1272" y="16"/>
<use href="#gb3" x="0" y="32"/><use href="#gb3" x="1272" y="32"/>
<use href="#gb3" x="0" y="48"/><use href="#gb3" x="1272" y="48"/>
<use href="#gb3" x="0" y="64"/><use href="#gb3" x="1272" y="64"/>
<use href="#gb3" x="0" y="80"/><use href="#gb3" x="1272" y="80"/>
<use href="#gb3" x="0" y="96"/><use href="#gb3" x="1272" y="96"/>
<use href="#gb3" x="0" y="112"/><use href="#gb3" x="1272" y="112"/>
<use href="#gb3" x="0" y="128"/><use href="#gb3" x="1272" y="128"/>
<use href="#gb3" x="0" y="144"/><use href="#gb3" x="1272" y="144"/>
<use href="#gb3" x="0" y="160"/><use href="#gb3" x="1272" y="160"/>
<use href="#gb3" x="0" y="176"/><use href="#gb3" x="1272" y="176"/>
<use href="#gb3" x="0" y="192"/><use href="#gb3" x="1272" y="192"/>
<use href="#gb3" x="0" y="208"/><use href="#gb3" x="1272" y="208"/>
<use href="#gb3" x="0" y="224"/><use href="#gb3" x="1272" y="224"/>
<use href="#gb3" x="0" y="240"/><use href="#gb3" x="1272" y="240"/>
<use href="#gb3" x="0" y="256"/><use href="#gb3" x="1272" y="256"/>
<use href="#gb3" x="0" y="272"/><use href="#gb3" x="1272" y="272"/>
<use href="#gb3" x="0" y="288"/><use href="#gb3" x="1272" y="288"/>
<use href="#gb3" x="0" y="304"/><use href="#gb3" x="1272" y="304"/>
<use href="#g3c" x="32" y="800"/><use href="#g73" x="40" y="800"/><use href="#g69" x="48" y="800"/><use href="#g67" x="56" y="800"/><use href="#g6e" x="64" y="800"/><use href="#g61" x="72" y="800"/><use href="#g6c" x="80" y="800"/><use href="#g68" x="96" y="800"/><use href="#g61" x="104" y="800"/><use href="#g6e" x="112" y="800"/><use href="#g64" x="120" y="800"/><use href="#g6c" x="128" y="800"/><use href="#g65" x="136" y="800"/><use href="#g72" x="144" y="800"/><use href="#g63" x="160" y="800"/><use href="#g61" x="168" y="800"/><use href="#g6c" x="176" y="800"/><use href="#g6c" x="184" y="800"/><use href="#g65" x="192" y="800"/><use href="#g64" x="200" y="800"/><use href="#g3e" x="208" y="800"/>
<use href="#g3c" x="32" y="848"/><use href="#g73" x="40" y="848"/><use href="#g69" x="48" y="848"/><use href="#g67" x="56" y="848"/><use href="#g6e" x="64" y="848"/><use href="#g61" x="72" y="848"/><use href="#g6c" x="80" y="848"/><use href="#g68" x="96" y="848"/><use href="#g61" x="104" y="848"/><use href="#g6e" x="112" y="848"/><use href="#g64" x="120" y="848"/><use href="#g6c" x="128" y="848"/><use href="#g65" x="136" y="848"/><use href="#g72" x="144" y="848"/><use href="#g63" x="160" y="848"/><use href="#g61" x="168" y="848"/><use href="#g6c" x="176" y="848"/><use href="#g6c" x="184" y="848"/><use href="#g65" x="192" y="848"/><use href="#g64" x="200" y="848"/><use href="#g3e" x="208" y="848"/>
</g>
<g fill="#aaaaaa">
<use href="#g31" x="32" y="16"/><use href="#g33" x="40" y="16"/><use href="#g31" x="48" y="16"/>
<use href="#g31" x="32" y="32"/><use href="#g33" x="40" y="32"/><use href="#g32" x="48" y="32"/>
<use href="#g31" x="32" y="48"/><use href="#g33" x="40" y="48"/><use href="#g33" x="48" y="48"/>
<use href="#g31" x="32" y="64"/><use href="#g33" x="40" y="64"/><use href="#g34" x="48" y="64"/>
<use href="#g31" x="32" y="80"/><use href="#g33" x="40" y="80"/><use href="#g35" x="48" y="80"/>
<use href="#g31" x="32" y="96"/><use href="#g33" x="40" y="96"/><use href="#g36" x="48" y="96"/><use href="#g55" x="160" y="96"/><use href="#g53" x="168" y="96"/><use href="#g45" x="176" y="96"/><use href="#g5f" x="184" y="96"/><use href="#g53" x="192" y="96"/><use href="#g49" x="200" y="96"/><use href="#g47" x="208" y="96"/><use href="#g54" x="216" y="96"/><use href="#g53" x="224" y="96"/><use href="#g54" x="232" y="96"/><use href="#g50" x="240" y="96"/>
<use href="#g31" x="32" y="112"/><use href="#g33" x="40" y="112"/><use href="#g37" x="48" y="112"/>
<use href="#g31" x="32" y="128"/><use href="#g33" x="40" y="128"/><use href="#g38" x="48" y="128"/><use href="#g64" x="280" y="128"/><use href="#g75" x="288" y="128"/><use href="#g6d" x="296" y="128"/><use href="#g6d" x="304" y="128"/><use href="#g79" x="312" y="128"/><use href="#g47" x="328" y="128"/><use href="#g43" x="336" y="128"/><use href="#g43" x="344" y="128"/><use href="#g5f" x="352" y="128"/><use href="#g55" x="360" y="128"/><use href="#g4e" x="368" y="128"/><use href="#g55" x="376" y="128"/><use href="#g53" x="384" y="128"/><use href="#g45" x="392" y="128"/><use href="#g44" x="400" y="128"/>
<use href="#g42" x="8" y="144"/><use href="#g2b" x="16" y="144"/><use href="#g3e" x="24" y="144"/>
<use href="#g31" x="32" y="160"/><use href="#g34" x="40" y="160"/><use href="#g30" x="48" y="160"/><use href="#g53" x="160" y="160"/><use href="#g43" x="168" y="160"/><use href="#g52" x="176" y="160"/><use href="#g45" x="184" y="160"/><use href="#g45" x="192" y="160"/><use href="#g4e" x="200" y="160"/><use href="#g73" x="224" y="160"/><use href="#g70" x="232" y="160"/><use href="#g43" x="264" y="160"/><use href="#g55" x="272" y="160"/><use href="#g52" x="280" y="160"/><use href="#g52" x="288" y="160"/><use href="#g45" x="296" y="160"/><use href="#g4e" x="304" y="160"/><use href="#g54" x="312" y="160"/><use href="#g5f" x="320" y="160"/><use href="#g53" x="328" y="160"/><use href="#g43" x="336" y="160"/><use href="#g52" x="344" y="160"/><use href="#g45" x="352" y="160"/><use href="#g45" x="360" y="160"/><use href="#g4e" x="368" y="160"/>
<use href="#g31" x="32" y="176"/><use href="#g34" x="40" y="176"/><use href="#g31" x="48" y="176"/><use href="#g73" x="160" y="176"/><use href="#g69" x="168" y="176"/><use href="#g67" x="176" y="176"/><use href="#g73" x="184" y="176"/><use href="#g65" x="192" y="176"/><use href="#g74" x="200" y="176"/><use href="#g5f" x="208" y="176"/><use href="#g74" x="216" y="176"/><use href="#g6d" x="232" y="176"/><use href="#g61" x="240" y="176"/><use href="#g73" x="248" y="176"/><use href="#g6b" x="256" y="176"/><use href="#g6f" x="280" y="176"/><use href="#g6d" x="288" y="176"/><use href="#g61" x="296" y="176"/><use href="#g73" x="304" y="176"/><use href="#g6b" x="312" y="176"/>
<use href="#g31" x="32" y="192"/><use href="#g34" x="40" y="192"/><use href="#g32" x="48" y="192"/><use href="#g73" x="160" y="192"/><use href="#g69" x="168" y="192"/><use href="#g67" x="176" y="192"/><use href="#g61" x="184" y="192"/><use href="#g63" x="192" y="192"/><use href="#g74" x="200" y="192"/><use href="#g69" x="208" y="192"/><use href="#g6f" x="216" y="192"/><use href="#g6e" x="224" y="192"/><use href="#g5f" x="232" y="192"/><use href="#g74" x="240" y="192"/><use href="#g61" x="256" y="192"/><use href="#g63" x="264" y="192"/><use href="#g74" x="272" y="192"/><use href="#g6f" x="296" y="192"/><use href="#g61" x="304" y="192"/><use href="#g63" x="312" y="192"/><use href="#g74" x="320" y="192"/>
<use href="#g31" x="32" y="208"/><use href="#g34" x="40" y="208"/><use href="#g33" x="48" y="208"/>
<use href="#g31" x="32" y="224"/><use href="#g34" x="40" y="224"/><use href="#g34" x="48" y="224"/><use href="#g53" x="184" y="224"/><use href="#g49" x="192" y="224"/><use href="#g47" x="200" y="224"/><use href="#g54" x="208" y="224"/><use href="#g54" x="216" y="224"/><use href="#g4f" x="224" y="224"/><use href="#g55" x="232" y="224"/>
<use href="#g31" x="32" y="240"/><use href="#g34" x="40" y="240"/><use href="#g35" x="48" y="240"/><use href="#g73" x="192" y="240"/><use href="#g69" x="200" y="240"/><use href="#g67" x="208" y="240"/><use href="#g74" x="216" y="240"/><use href="#g74" x="224" y="240"/><use href="#g6f" x="232" y="240"/><use href="#g75" x="240" y="240"/><use href="#g5f" x="248" y="240"/><use href="#g62" x="256" y="240"/><use href="#g6c" x="264" y="240"/><use href="#g6f" x="272" y="240"/><use href="#g63" x="280" y="240"/><use href="#g6b" x="288" y="240"/><use href="#g65" x="296" y="240"/><use href="#g64" x="304" y="240"/>
<use href="#g31" x="32" y="256"/><use href="#g34" x="40" y="256"/><use href="#g36" x="48" y="256"/>
<use href="#g31" x="32" y="272"/><use href="#g34" x="40" y="272"/><use href="#g37" x="48" y="272"/>
<use href="#g31" x="32" y="288"/><use href="#g34" x="40" y="288"/><use href="#g38" x="48" y="288"/><use href="#g5f" x="160" y="288"/><use href="#g6e" x="168" y="288"/><use href="#g63" x="176" y="288"/><use href="#g5f" x="184" y="288"/><use href="#g67" x="192" y="288"/><use href="#g6c" x="200" y="288"/><use href="#g6f" x="208" y="288"/><use href="#g62" x="216" y="288"/><use href="#g61" x="224" y="288"/><use href="#g6c" x="232" y="288"/><use href="#g73" x="240" y="288"/><use href="#g68" x="256" y="288"/><use href="#g61" x="264" y="288"/><use href="#g76" x="272" y="288"/><use href="#g65" x="280" y="288"/><use href="#g5f" x="288" y="288"/><use href="#g73" x="296" y="288"/><use href="#g69" x="304" y="288"/><use href="#g67" x="312" y="288"/><use href="#g74" x="320" y="288"/><use href="#g73" x="328" y="288"/><use href="#g74" x="336" y="288"/><use href="#g70" x="344" y="288"/>
<use href="#g31" x="32" y="304"/><use href="#g34" x="40" y="304"/><use href="#g39" x="48" y="304"/>
<use href="#g42" x="8" y="336"/><use href="#g2b" x="16" y="336"/><use href="#g3e" x="24" y="336"/>
<use href="#g3c" x="120" y="352"/><use href="#g2b" x="240" y="352"/><use href="#g32" x="248" y="352"/><use href="#g3e" x="256" y="352"/><use href="#g70" x="288" y="352"/><use href="#g75" x="296" y="352"/><use href="#g73" x="304" y="352"/><use href="#g68" x="312" y="352"/><use href="#g72" x="344" y="352"/><use href="#g31" x="352" y="352"/><use href="#g33" x="360" y="352"/>
<use href="#g3c" x="120" y="368"/><use href="#g2b" x="240" y="368"/><use href="#g34" x="248" y="368"/><use href="#g3e" x="256" y="368"/><use href="#g70" x="288" y="368"/><use href="#g75" x="296" y="368"/><use href="#g73" x="304" y="368"/><use href="#g68" x="312" y="368"/><use href="#g72" x="344" y="368"/><use href="#g31" x="352" y="368"/><use href="#g32" x="360" y="368"/>
<use href="#g3c" x="120" y="384"/><use href="#g2b" x="240" y="384"/><use href="#g36" x="248" y="384"/><use href="#g3e" x="256" y="384"/><use href="#g78" x="288" y="384"/><use href="#g6f" x="296" y="384"/><use href="#g72" x="304" y="384"/><use href="#g72" x="344" y="384"/><use href="#g31" x="352" y="384"/><use href="#g32" x="360" y="384"/><use href="#g64" x="368" y="384"/><use href="#g2c" x="376" y="384"/><use href="#g72" x="384" y="384"/><use href="#g31" x="392" y="384"/><use href="#g32" x="400" y="384"/><use href="#g64" x="408" y="384"/>
<use href="#g3c" x="120" y="400"/><use href="#g2b" x="240" y="400"/><use href="#g39" x="248" y="400"/><use href="#g3e" x="256" y="400"/><use href="#g70" x="288" y="400"/><use href="#g75" x="296" y="400"/><use href="#g73" x="304" y="400"/><use href="#g68" x="312" y="400"/><use href="#g72" x="344" y="400"/><use href="#g62" x="352" y="400"/><use href="#g70" x="360" y="400"/>
<use href="#g3c" x="120" y="416"/><use href="#g2b" x="240" y="416"/><use href="#g31" x="248" y="416"/><use href="#g30" x="256" y="416"/><use href="#g3e" x="264" y="416"/><use href="#g70" x="288" y="416"/><use href="#g75" x="296" y="416"/><use href="#g73" x="304" y="416"/><use href="#g68" x="312" y="416"/><use href="#g72" x="344" y="416"/><use href="#g62" x="352" y="416"/><use href="#g78" x="360" y="416"/>
<use href="#g3c" x="120" y="432"/><use href="#g2b" x="240" y="432"/><use href="#g31" x="248" y="432"/><use href="#g31" x="256" y="432"/><use href="#g3e" x="264" y="432"/><use href="#g73" x="288" y="432"/><use href="#g75" x="296" y="432"/><use href="#g62" x="304" y="432"/><use href="#g65" x="344" y="432"/><use href="#g73" x="352" y="432"/><use href="#g70" x="360" y="432"/><use href="#g2c" x="368" y="432"/><use href="#g30" x="376" y="432"/><use href="#g78" x="384" y="432"/><use href="#g32" x="392" y="432"/><use href="#g32" x="400" y="432"/><use href="#g30" x="408" y="432"/>
<use href="#g3c" x="120" y="448"/><use href="#g2b" x="240" y="448"/><use href="#g31" x="248" y="448"/><use href="#g37" x="256" y="448"/><use href="#g3e" x="264" y="448"/><use href="#g6d" x="288" y="448"/><use href="#g6f" x="296" y="448"/><use href="#g76" x="304" y="448"/><use href="#g65" x="344" y="448"/><use href="#g64" x="352" y="448"/><use href="#g78" x="360" y="448"/><use href="#g2c" x="368" y="448"/><use href="#g44" x="376" y="448"/><use href="#g57" x="384" y="448"/><use href="#g4f" x="392" y="448"/><use href="#g52" x="400" y="448"/><use href="#g44" x="408" y="448"/><use href="#g50" x="424" y="448"/><use href="#g54" x="432" y="448"/><use href="#g52" x="440" y="448"/><use href="#g5b" x="456" y="448"/><use href="#g72" x="464" y="448"/><use href="#g69" x="472" y="448"/><use href="#g70" x="480" y="448"/><use href="#g2b" x="488" y="448"/><use href="#g30" x="496" y="448"/><use href="#g78" x="504" y="448"/><use href="#g31" x="512" y="448"/><use href="#g62" x="520" y="448"/><use href="#g38" x="528" y="448"/><use href="#g64" x="536" y="448"/><use href="#g31" x="544" y="448"/><use href="#g5d" x="552" y="448"/><use href="#g23" x="624" y="448"/>
<use href="#g3c" x="120" y="464"/><use href="#g2b" x="240" y="464"/><use href="#g32" x="248" y="464"/><use href="#g33" x="256" y="464"/><use href="#g3e" x="264" y="464"/><use href="#g6d" x="288" y="464"/><use href="#g6f" x="296" y="464"/><use href="#g76" x="304" y="464"/><use href="#g65" x="344" y="464"/><use href="#g61" x="352" y="464"/><use href="#g78" x="360" y="464"/><use href="#g2c" x="368" y="464"/><use href="#g44" x="376" y="464"/><use href="#g57" x="384" y="464"/><use href="#g4f" x="392" y="464"/><use href="#g52" x="400" y="464"/><use href="#g44" x="408" y="464"/><use href="#g50" x="424" y="464"/><use href="#g54" x="432" y="464"/><use href="#g52" x="440" y="464"/><use href="#g66" x="456" y="464"/><use href="#g73" x="464" y="464"/><use href="#g3a" x="472" y="464"/><use href="#g30" x="480" y="464"/><use href="#g78" x="488" y="464"/><use href="#g31" x="496" y="464"/><use href="#g38" x="504" y="464"/>
<use href="#g3c" x="120" y="480"/><use href="#g2b" x="240" y="480"/><use href="#g33" x="248" y="480"/><use href="#g31" x="256" y="480"/><use href="#g3e" x="264" y="480"/><use href="#g6d" x="288" y="480"/><use href="#g6f" x="296" y="480"/><use href="#g76" x="304" y="480"/><use href="#g44" x="344" y="480"/><use href="#g57" x="352" y="480"/><use href="#g4f" x="360" y="480"/><use href="#g52" x="368" y="480"/><use href="#g44" x="376" y="480"/><use href="#g50" x="392" y="480"/><use href="#g54" x="400" y="480"/><use href="#g52" x="408" y="480"/><use href="#g5b" x="424" y="480"/><use href="#g72" x="432" y="480"/><use href="#g73" x="440" y="480"/><use href="#g70" x="448" y="480"/><use href="#g2b" x="456" y="480"/><use href="#g30" x="464" y="480"/><use href="#g78" x="472" y="480"/><use href="#g32" x="480" y="480"/><use href="#g31" x="488" y="480"/><use href="#g63" x="496" y="480"/><use href="#g5d" x="504" y="480"/><use href="#g2c" x="512" y="480"/><use href="#g65" x="520" y="480"/><use href="#g61" x="528" y="480"/><use href="#g78" x="536" y="480"/>
<use href="#g3c" x="120" y="496"/><use href="#g2b" x="240" y="496"/><use href="#g33" x="248" y="496"/><use href="#g38" x="256" y="496"/><use href="#g3e" x="264" y="496"/><use href="#g78" x="288" y="496"/><use href="#g6f" x="296" y="496"/><use href="#g72" x="304" y="496"/><use href="#g65" x="344" y="496"/><use href="#g61" x="352" y="496"/><use href="#g78" x="360" y="496"/><use href="#g2c" x="368" y="496"/><use href="#g65" x="376" y="496"/><use href="#g61" x="384" y="496"/><use href="#g78" x="392" y="496"/>
<use href="#g3c" x="120" y="512"/><use href="#g2b" x="240" y="512"/><use href="#g34" x="248" y="512"/><use href="#g30" x="256" y="512"/><use href="#g3e" x="264" y="512"/><use href="#g6d" x="288" y="512"/><use href="#g6f" x="296" y="512"/><use href="#g76" x="304" y="512"/><use href="#g65" x="344" y="512"/><use href="#g61" x="352" y="512"/><use href="#g78" x="360" y="512"/><use href="#g2c" x="368" y="512"/><use href="#g44" x="376" y="512"/><use href="#g57" x="384" y="512"/><use href="#g4f" x="392" y="512"/><use href="#g52" x="400" y="512"/><use href="#g44" x="408" y="512"/><use href="#g50" x="424" y="512"/><use href="#g54" x="432" y="512"/><use href="#g52" x="440" y="512"/><use href="#g5b" x="456" y="512"/><use href="#g72" x="464" y="512"/><use href="#g69" x="472" y="512"/><use href="#g70" x="480" y="512"/><use href="#g2b" x="488" y="512"/><use href="#g30" x="496" y="512"/><use href="#g78" x="504" y="512"/><use href="#g31" x="512" y="512"/><use href="#g62" x="520" y="512"/><use href="#g39" x="528" y="512"/><use href="#g32" x="536" y="512"/><use href="#g61" x="544" y="512"/><use href="#g5d" x="552" y="512"/><use href="#g23" x="624" y="512"/>
<use href="#g3c" x="120" y="528"/><use href="#g2b" x="240" y="528"/><use href="#g34" x="248" y="528"/><use href="#g36" x="256" y="528"/><use href="#g3e" x="264" y="528"/><use href="#g6d" x="288" y="528"/><use href="#g6f" x="296" y="528"/><use href="#g76" x="304" y="528"/><use href="#g44" x="344" y="528"/><use href="#g57" x="352" y="528"/><use href="#g4f" x="360" y="528"/><use href="#g52" x="368" y="528"/><use href="#g44" x="376" y="528"/><use href="#g50" x="392" y="528"/><use href="#g54" x="400" y="528"/><use href="#g52" x="408" y="528"/><use href="#g5b" x="424" y="528"/><use href="#g65" x="432" y="528"/><use href="#g64" x="440" y="528"/><use href="#g78" x="448" y="528"/><use href="#g5d" x="456" y="528"/><use href="#g2c" x="464" y="528"/><use href="#g30" x="472" y="528"/><use href="#g78" x="480" y="528"/><use href="#g31" x="488" y="528"/>
<use href="#g3c" x="120" y="544"/><use href="#g2b" x="240" y="544"/><use href="#g35" x="248" y="544"/><use href="#g33" x="256" y="544"/><use href="#g3e" x="264" y="544"/><use href="#g6d" x="288" y="544"/><use href="#g6f" x="296" y="544"/><use href="#g76" x="304" y="544"/><use href="#g65" x="344" y="544"/><use href="#g61" x="352" y="544"/><use href="#g78" x="360" y="544"/><use href="#g2c" x="368" y="544"/><use href="#g44" x="376" y="544"/><use href="#g57" x="384" y="544"/><use href="#g4f" x="392" y="544"/><use href="#g52" x="400" y="544"/><use href="#g44" x="408" y="544"/><use href="#g50" x="424" y="544"/><use href="#g54" x="432" y="544"/><use href="#g52" x="440" y="544"/><use href="#g5b" x="456" y="544"/><use href="#g65" x="464" y="544"/><use href="#g61" x="472" y="544"/><use href="#g78" x="480" y="544"/><use href="#g5d" x="488" y="544"/>
<use href="#g3c" x="120" y="560"/><use href="#g2b" x="240" y="560"/><use href="#g35" x="248" y="560"/><use href="#g36" x="256" y="560"/><use href="#g3e" x="264" y="560"/><use href="#g74" x="288" y="560"/><use href="#g65" x="296" y="560"/><use href="#g73" x="304" y="560"/><use href="#g74" x="312" y="560"/><use href="#g65" x="344" y="560"/><use href="#g61" x="352" y="560"/><use href="#g78" x="360" y="560"/><use href="#g2c" x="368" y="560"/><use href="#g65" x="376" y="560"/><use href="#g61" x="384" y="560"/><use href="#g78" x="392" y="560"/>
<use href="#g3c" x="120" y="576"/><use href="#g2b" x="240" y="576"/><use href="#g35" x="248" y="576"/><use href="#g38" x="256" y="576"/><use href="#g3e" x="264" y="576"/><use href="#g6a" x="288" y="576"/><use href="#g65" x="296" y="576"/><use href="#g3c" x="432" y="576"/><use href="#g2b" x="552" y="576"/><use href="#g37" x="560" y="576"/><use href="#g37" x="568" y="576"/><use href="#g3e" x="576" y="576"/>
<use href="#g3c" x="120" y="592"/><use href="#g2b" x="240" y="592"/><use href="#g36" x="248" y="592"/><use href="#g30" x="256" y="592"/><use href="#g3e" x="264" y="592"/><use href="#g63" x="288" y="592"/><use href="#g6d" x="296" y="592"/><use href="#g70" x="304" y="592"/><use href="#g44" x="344" y="592"/><use href="#g57" x="352" y="592"/><use href="#g4f" x="360" y="592"/><use href="#g52" x="368" y="592"/><use href="#g44" x="376" y="592"/><use href="#g50" x="392" y="592"/><use href="#g54" x="400" y="592"/><use href="#g52" x="408" y="592"/><use href="#g5b" x="424" y="592"/><use href="#g65" x="432" y="592"/><use href="#g61" x="440" y="592"/><use href="#g78" x="448" y="592"/><use href="#g2b" x="456" y="592"/><use href="#g30" x="464" y="592"/><use href="#g78" x="472" y="592"/><use href="#g32" x="480" y="592"/><use href="#g61" x="488" y="592"/><use href="#g63" x="496" y="592"/><use href="#g5d" x="504" y="592"/><use href="#g2c" x="512" y="592"/><use href="#g30" x="520" y="592"/><use href="#g78" x="528" y="592"/><use href="#g31" x="536" y="592"/>
<use href="#g3c" x="120" y="608"/><use href="#g2b" x="240" y="608"/><use href="#g36" x="248" y="608"/><use href="#g38" x="256" y="608"/><use href="#g3e" x="264" y="608"/><use href="#g6d" x="288" y="608"/><use href="#g6f" x="296" y="608"/><use href="#g76" x="304" y="608"/><use href="#g72" x="344" y="608"/><use href="#g31" x="352" y="608"/><use href="#g32" x="360" y="608"/><use href="#g64" x="368" y="608"/><use href="#g2c" x="376" y="608"/><use href="#g65" x="384" y="608"/><use href="#g61" x="392" y="608"/><use href="#g78" x="400" y="608"/>
<use href="#g3c" x="120" y="624"/><use href="#g2b" x="240" y="624"/><use href="#g37" x="248" y="624"/><use href="#g31" x="256" y="624"/><use href="#g3e" x="264" y="624"/><use href="#g6a" x="288" y="624"/><use href="#g65" x="296" y="624"/><use href="#g3c" x="432" y="624"/><use href="#g2b" x="552" y="624"/><use href="#g34" x="560" y="624"/><use href="#g36" x="568" y="624"/><use href="#g34" x="576" y="624"/><use href="#g3e" x="584" y="624"/>
<use href="#g3c" x="120" y="640"/><use href="#g2b" x="240" y="640"/><use href="#g37" x="248" y="640"/><use href="#g37" x="256" y="640"/><use href="#g3e" x="264" y="640"/><use href="#g6d" x="288" y="640"/><use href="#g6f" x="296" y="640"/><use href="#g76" x="304" y="640"/><use href="#g65" x="344" y="640"/><use href="#g62" x="352" y="640"/><use href="#g70" x="360" y="640"/><use href="#g2c" x="368" y="640"/><use href="#g65" x="376" y="640"/><use href="#g73" x="384" y="640"/><use href="#g70" x="392" y="640"/>
<use href="#g50" x="0" y="688"/><use href="#g72" x="8" y="688"/><use href="#g6f" x="16" y="688"/><use href="#g67" x="24" y="688"/><use href="#g72" x="32" y="688"/><use href="#g61" x="40" y="688"/><use href="#g6d" x="48" y="688"/><use href="#g72" x="64" y="688"/><use href="#g65" x="72" y="688"/><use href="#g63" x="80" y="688"/><use href="#g65" x="88" y="688"/><use href="#g69" x="96" y="688"/><use href="#g76" x="104" y="688"/><use href="#g65" x="112" y="688"/><use href="#g64" x="120" y="688"/><use href="#g73" x="136" y="688"/><use href="#g69" x="144" y="688"/><use href="#g67" x="152" y="688"/><use href="#g6e" x="160" y="688"/><use href="#g61" x="168" y="688"/><use href="#g6c" x="176" y="688"/><use href="#g53" x="192" y="688"/><use href="#g49" x="200" y="688"/><use href="#g47" x="208" y="688"/><use href="#g54" x="216" y="688"/><use href="#g53" x="224" y="688"/><use href="#g54" x="232" y="688"/><use href="#g50" x="240" y="688"/><use href="#g2c" x="248" y="688"/><use href="#g53" x="264" y="688"/><use href="#g74" x="272" y="688"/><use href="#g6f" x="280" y="688"/><use href="#g70" x="288" y="688"/><use href="#g70" x="296" y="688"/><use href="#g65" x="304" y="688"/><use href="#g64" x="312" y="688"/><use href="#g28" x="328" y="688"/><use href="#g75" x="336" y="688"/><use href="#g73" x="344" y="688"/><use href="#g65" x="352" y="688"/><use href="#g72" x="360" y="688"/><use href="#g29" x="368" y="688"/><use href="#g2e" x="376" y="688"/>
<use href="#g69" x="88" y="704"/><use href="#g6e" x="96" y="704"/><use href="#g28" x="152" y="704"/><use href="#g29" x="160" y="704"/><use href="#g61" x="176" y="704"/><use href="#g74" x="184" y="704"/><use href="#g3a" x="472" y="704"/><use href="#g37" x="480" y="704"/><use href="#g38" x="488" y="704"/>
<use href="#g43" x="0" y="720"/><use href="#g6f" x="8" y="720"/><use href="#g6e" x="16" y="720"/><use href="#g74" x="24" y="720"/><use href="#g69" x="32" y="720"/><use href="#g6e" x="40" y="720"/><use href="#g75" x="48" y="720"/><use href="#g69" x="56" y="720"/><use href="#g6e" x="64" y="720"/><use href="#g67" x="72" y="720"/><use href="#g2e" x="80" y="720"/>
<use href="#g42" x="0" y="752"/><use href="#g72" x="8" y="752"/><use href="#g65" x="16" y="752"/><use href="#g61" x="24" y="752"/><use href="#g6b" x="32" y="752"/><use href="#g70" x="40" y="752"/><use href="#g6f" x="48" y="752"/><use href="#g69" x="56" y="752"/><use href="#g6e" x="64" y="752"/><use href="#g74" x="72" y="752"/><use href="#g32" x="88" y="752"/><use href="#g2c" x="96" y="752"/><use href="#g28" x="232" y="752"/><use href="#g3d" x="280" y="752"/><use href="#g32" x="288" y="752"/><use href="#g30" x="296" y="752"/><use href="#g29" x="304" y="752"/><use href="#g61" x="320" y="752"/><use href="#g74" x="328" y="752"/><use href="#g3a" x="568" y="752"/><use href="#g31" x="576" y="752"/><use href="#g33" x="584" y="752"/><use href="#g39" x="592" y="752"/>
<use href="#g28" x="0" y="768"/><use href="#g67" x="8" y="768"/><use href="#g64" x="16" y="768"/><use href="#g62" x="24" y="768"/><use href="#g29" x="32" y="768"/><use href="#g62" x="48" y="768"/><use href="#g74" x="56" y="768"/>
<use href="#g23" x="0" y="784"/><use href="#g30" x="8" y="784"/><use href="#g28" x="152" y="784"/><use href="#g3d" x="200" y="784"/><use href="#g32" x="208" y="784"/><use href="#g30" x="216" y="784"/><use href="#g29" x="224" y="784"/><use href="#g61" x="240" y="784"/><use href="#g74" x="248" y="784"/><use href="#g3a" x="488" y="784"/><use href="#g31" x="496" y="784"/><use href="#g33" x="504" y="784"/><use href="#g39" x="512" y="784"/>
<use href="#g23" x="0" y="800"/><use href="#g31" x="8" y="800"/>
<use href="#g23" x="0" y="816"/><use href="#g32" x="8" y="816"/><use href="#g69" x="120" y="816"/><use href="#g6e" x="128" y="816"/><use href="#g28" x="184" y="816"/><use href="#g29" x="192" y="816"/><use href="#g61" x="208" y="816"/><use href="#g74" x="216" y="816"/><use href="#g3a" x="504" y="816"/><use href="#g37" x="512" y="816"/><use href="#g38" x="520" y="816"/>
<use href="#g23" x="0" y="832"/><use href="#g33" x="8" y="832"/><use href="#g69" x="120" y="832"/><use href="#g6e" x="128" y="832"/><use href="#g28" x="280" y="832"/><use href="#g3d" x="336" y="832"/><use href="#g3c" x="344" y="832"/><use href="#g6f" x="352" y="832"/><use href="#g70" x="360" y="832"/><use href="#g74" x="368" y="832"/><use href="#g69" x="376" y="832"/><use href="#g6d" x="384" y="832"/><use href="#g69" x="392" y="832"/><use href="#g7a" x="400" y="832"/><use href="#g65" x="408" y="832"/><use href="#g64" x="416" y="832"/><use href="#g6f" x="432" y="832"/><use href="#g75" x="440" y="832"/><use href="#g74" x="448" y="832"/><use href="#g3e" x="456" y="832"/><use href="#g29" x="464" y="832"/><use href="#g61" x="480" y="832"/><use href="#g74" x="488" y="832"/><use href="#g3a" x="600" y="832"/><use href="#g31" x="608" y="832"/><use href="#g36" x="616" y="832"/><use href="#g39" x="624" y="832"/>
<use href="#g23" x="0" y="848"/><use href="#g34" x="8" y="848"/>
<use href="#g23" x="0" y="864"/><use href="#g35" x="8" y="864"/><use href="#g69" x="120" y="864"/><use href="#g6e" x="128" y="864"/><use href="#g28" x="240" y="864"/><use href="#g3d" x="272" y="864"/><use href="#g30" x="280" y="864"/><use href="#g78" x="288" y="864"/><use href="#g66" x="296" y="864"/><use href="#g66" x="304" y="864"/><use href="#g66" x="312" y="864"/><use href="#g66" x="320" y="864"/><use href="#g64" x="328" y="864"/><use href="#g31" x="336" y="864"/><use href="#g63" x="344" y="864"/><use href="#g30" x="352" y="864"/><use href="#g2c" x="360" y="864"/><use href="#g3d" x="408" y="864"/><use href="#g32" x="416" y="864"/><use href="#g2c" x="424" y="864"/><use href="#g3d" x="608" y="864"/><use href="#g31" x="616" y="864"/><use href="#g35" x="624" y="864"/><use href="#g30" x="632" y="864"/><use href="#g30" x="640" y="864"/><use href="#g29" x="648" y="864"/><use href="#g61" x="664" y="864"/><use href="#g74" x="672" y="864"/><use href="#g3a" x="952" y="864"/><use href="#g32" x="960" y="864"/><use href="#g39" x="968" y="864"/>
<use href="#g23" x="0" y="880"/><use href="#g36" x="8" y="880"/><use href="#g69" x="120" y="880"/><use href="#g6e" x="128" y="880"/><use href="#g28" x="232" y="880"/><use href="#g3d" x="344" y="880"/><use href="#g30" x="352" y="880"/><use href="#g78" x="360" y="880"/><use href="#g66" x="368" y="880"/><use href="#g66" x="376" y="880"/><use href="#g66" x="384" y="880"/><use href="#g66" x="392" y="880"/><use href="#g64" x="400" y="880"/><use href="#g31" x="408" y="880"/><use href="#g63" x="416" y="880"/><use href="#g30" x="424" y="880"/><use href="#g2c" x="432" y="880"/><use href="#g3d" x="480" y="880"/><use href="#g3c" x="488" y="880"/><use href="#g6f" x="496" y="880"/><use href="#g70" x="504" y="880"/><use href="#g74" x="512" y="880"/><use href="#g69" x="520" y="880"/><use href="#g6d" x="528" y="880"/><use href="#g69" x="536" y="880"/><use href="#g7a" x="544" y="880"/><use href="#g65" x="552" y="880"/><use href="#g64" x="560" y="880"/><use href="#g6f" x="576" y="880"/><use href="#g75" x="584" y="880"/><use href="#g74" x="592" y="880"/><use href="#g3e" x="600" y="880"/><use href="#g2c" x="608" y="880"/><use href="#g3d" x="792" y="880"/><use href="#g31" x="800" y="880"/><use href="#g35" x="808" y="880"/><use href="#g30" x="816" y="880"/><use href="#g30" x="824" y="880"/><use href="#g2c" x="832" y="880"/><use href="#g3d" x="1000" y="880"/><use href="#g31" x="1008" y="880"/><use href="#g36" x="1016" y="880"/><use href="#g29" x="1024" y="880"/><use href="#g61" x="1040" y="880"/><use href="#g74" x="1048" y="880"/><use href="#g3a" x="1144" y="880"/><use href="#g32" x="1152" y="880"/><use href="#g37" x="1160" y="880"/>
<use href="#g23" x="0" y="896"/><use href="#g37" x="8" y="896"/><use href="#g69" x="120" y="896"/><use href="#g6e" x="128" y="896"/><use href="#g28" x="184" y="896"/><use href="#g3d" x="264" y="896"/><use href="#g31" x="272" y="896"/><use href="#g35" x="280" y="896"/><use href="#g30" x="288" y="896"/><use href="#g30" x="296" y="896"/><use href="#g2c" x="304" y="896"/><use href="#g3d" x="368" y="896"/><use href="#g3c" x="376" y="896"/><use href="#g6f" x="384" y="896"/><use href="#g70" x="392" y="896"/><use href="#g74" x="400" y="896"/><use href="#g69" x="408" y="896"/><use href="#g6d" x="416" y="896"/><use href="#g69" x="424" y="896"/><use href="#g7a" x="432" y="896"/><use href="#g65" x="440" y="896"/><use href="#g64" x="448" y="896"/><use href="#g6f" x="464" y="896"/><use href="#g75" x="472" y="896"/><use href="#g74" x="480" y="896"/><use href="#g3e" x="488" y="896"/><use href="#g2c" x="496" y="896"/><use href="#g3d" x="552" y="896"/><use href="#g30" x="560" y="896"/><use href="#g78" x="568" y="896"/><use href="#g66" x="576" y="896"/><use href="#g66" x="584" y="896"/><use href="#g66" x="592" y="896"/><use href="#g66" x="600" y="896"/><use href="#g64" x="608" y="896"/><use href="#g31" x="616" y="896"/><use href="#g63" x="624" y="896"/><use href="#g30" x="632" y="896"/><use href="#g29" x="640" y="896"/><use href="#g61" x="656" y="896"/><use href="#g74" x="664" y="896"/><use href="#g3a" x="1040" y="896"/><use href="#g34" x="1048" y="896"/><use href="#g31" x="1056" y="896"/>
<use href="#g23" x="0" y="912"/><use href="#g38" x="8" y="912"/><use href="#g28" x="152" y="912"/><use href="#g3d" x="248" y="912"/><use href="#g30" x="256" y="912"/><use href="#g78" x="264" y="912"/><use href="#g66" x="272" y="912"/><use href="#g32" x="280" y="912"/><use href="#g62" x="288" y="912"/><use href="#g30" x="296" y="912"/><use href="#g33" x="304" y="912"/><use href="#g36" x="312" y="912"/><use href="#g38" x="320" y="912"/><use href="#g30" x="328" y="912"/><use href="#g2c" x="336" y="912"/><use href="#g3d" x="472" y="912"/><use href="#g33" x="480" y="912"/><use href="#g2c" x="488" y="912"/><use href="#g3d" x="600" y="912"/><use href="#g31" x="608" y="912"/><use href="#g35" x="616" y="912"/><use href="#g30" x="624" y="912"/><use href="#g30" x="632" y="912"/><use href="#g2c" x="640" y="912"/><use href="#g3d" x="840" y="912"/><use href="#g30" x="848" y="912"/><use href="#g78" x="856" y="912"/><use href="#g30" x="864" y="912"/><use href="#g29" x="872" y="912"/><use href="#g61" x="888" y="912"/><use href="#g74" x="896" y="912"/><use href="#g3a" x="1144" y="912"/><use href="#g32" x="1152" y="912"/><use href="#g37" x="1160" y="912"/><use href="#g31" x="1168" y="912"/>
<use href="#g23" x="0" y="928"/><use href="#g39" x="8" y="928"/><use href="#g69" x="120" y="928"/><use href="#g6e" x="128" y="928"/><use href="#g28" x="312" y="928"/><use href="#g3d" x="360" y="928"/><use href="#g3c" x="368" y="928"/><use href="#g6f" x="376" y="928"/><use href="#g70" x="384" y="928"/><use href="#g74" x="392" y="928"/><use href="#g69" x="400" y="928"/><use href="#g6d" x="408" y="928"/><use href="#g69" x="416" y="928"/><use href="#g7a" x="424" y="928"/><use href="#g65" x="432" y="928"/><use href="#g64" x="440" y="928"/><use href="#g6f" x="456" y="928"/><use href="#g75" x="464" y="928"/><use href="#g74" x="472" y="928"/><use href="#g3e" x="480" y="928"/><use href="#g2c" x="488" y="928"/><use href="#g3d" x="520" y="928"/><use href="#g30" x="528" y="928"/><use href="#g78" x="536" y="928"/><use href="#g66" x="544" y="928"/><use href="#g32" x="552" y="928"/><use href="#g62" x="560" y="928"/><use href="#g30" x="568" y="928"/><use href="#g33" x="576" y="928"/><use href="#g36" x="584" y="928"/><use href="#g38" x="592" y="928"/><use href="#g30" x="600" y="928"/><use href="#g29" x="608" y="928"/><use href="#g61" x="624" y="928"/><use href="#g74" x="632" y="928"/><use href="#g3a" x="888" y="928"/><use href="#g34" x="896" y="928"/><use href="#g39" x="904" y="928"/><use href="#g36" x="912" y="928"/>
<use href="#g23" x="0" y="944"/><use href="#g31" x="8" y="944"/><use href="#g30" x="16" y="944"/><use href="#g28" x="120" y="944"/><use href="#g3d" x="232" y="944"/><use href="#g30" x="240" y="944"/><use href="#g78" x="248" y="944"/><use href="#g66" x="256" y="944"/><use href="#g33" x="264" y="944"/><use href="#g64" x="272" y="944"/><use href="#g30" x="280" y="944"/><use href="#g33" x="288" y="944"/><use href="#g34" x="296" y="944"/><use href="#g63" x="304" y="944"/><use href="#g38" x="312" y="944"/><use href="#g2c" x="320" y="944"/><use href="#g3d" x="488" y="944"/><use href="#g30" x="496" y="944"/><use href="#g78" x="504" y="944"/><use href="#g66" x="512" y="944"/><use href="#g66" x="520" y="944"/><use href="#g66" x="528" y="944"/><use href="#g66" x="536" y="944"/><use href="#g64" x="544" y="944"/><use href="#g33" x="552" y="944"/><use href="#g32" x="560" y="944"/><use href="#g38" x="568" y="944"/><use href="#g2c" x="576" y="944"/><use href="#g3d" x="656" y="944"/><use href="#g31" x="664" y="944"/><use href="#g29" x="672" y="944"/><use href="#g61" x="688" y="944"/><use href="#g74" x="696" y="944"/><use href="#g3a" x="952" y="944"/><use href="#g34" x="960" y="944"/><use href="#g39" x="968" y="944"/><use href="#g36" x="976" y="944"/>
<use href="#g23" x="0" y="960"/><use href="#g31" x="8" y="960"/><use href="#g31" x="16" y="960"/><use href="#g69" x="120" y="960"/><use href="#g6e" x="128" y="960"/><use href="#g28" x="200" y="960"/><use href="#g3d" x="232" y="960"/><use href="#g3c" x="240" y="960"/><use href="#g6f" x="248" y="960"/><use href="#g70" x="256" y="960"/><use href="#g74" x="264" y="960"/><use href="#g69" x="272" y="960"/><use href="#g6d" x="280" y="960"/><use href="#g69" x="288" y="960"/><use href="#g7a" x="296" y="960"/><use href="#g65" x="304" y="960"/><use href="#g64" x="312" y="960"/><use href="#g6f" x="328" y="960"/><use href="#g75" x="336" y="960"/><use href="#g74" x="344" y="960"/><use href="#g3e" x="352" y="960"/><use href="#g29" x="360" y="960"/><use href="#g61" x="376" y="960"/><use href="#g74" x="384" y="960"/><use href="#g3a" x="640" y="960"/><use href="#g31" x="648" y="960"/><use href="#g33" x="656" y="960"/><use href="#g33" x="664" y="960"/>
<use href="#g23" x="0" y="976"/><use href="#g31" x="8" y="976"/><use href="#g32" x="16" y="976"/><use href="#g69" x="120" y="976"/><use href="#g6e" x="128" y="976"/><use href="#g28" x="288" y="976"/><use href="#g29" x="296" y="976"/>
<use href="#g23" x="0" y="992"/><use href="#g31" x="8" y="992"/><use href="#g33" x="16" y="992"/><use href="#g69" x="120" y="992"/><use href="#g6e" x="128" y="992"/><use href="#g28" x="184" y="992"/><use href="#g29" x="192" y="992"/>
<use href="#g28" x="0" y="1008"/><use href="#g67" x="8" y="1008"/><use href="#g64" x="16" y="1008"/><use href="#g62" x="24" y="1008"/><use href="#g29" x="32" y="1008"/>
</g>
<g fill="#00aaaa">
<use href="#g2a" x="136" y="16"/>
<use href="#g2a" x="136" y="32"/><use href="#g54" x="152" y="32"/><use href="#g68" x="160" y="32"/><use href="#g69" x="168" y="32"/><use href="#g73" x="176" y="32"/><use href="#g69" x="192" y="32"/><use href="#g6d" x="200" y="32"/><use href="#g70" x="208" y="32"/><use href="#g6c" x="216" y="32"/><use href="#g65" x="224" y="32"/><use href="#g6d" x="232" y="32"/><use href="#g65" x="240" y="32"/><use href="#g6e" x="248" y="32"/><use href="#g74" x="256" y="32"/><use href="#g61" x="264" y="32"/><use href="#g74" x="272" y="32"/><use href="#g69" x="280" y="32"/><use href="#g6f" x="288" y="32"/><use href="#g6e" x="296" y="32"/><use href="#g77" x="312" y="32"/><use href="#g69" x="320" y="32"/><use href="#g6c" x="328" y="32"/><use href="#g6c" x="336" y="32"/><use href="#g70" x="352" y="32"/><use href="#g72" x="360" y="32"/><use href="#g6f" x="368" y="32"/><use href="#g62" x="376" y="32"/><use href="#g61" x="384" y="32"/><use href="#g62" x="392" y="32"/><use href="#g6c" x="400" y="32"/><use href="#g79" x="408" y="32"/><use href="#g62" x="424" y="32"/><use href="#g65" x="432" y="32"/><use href="#g63" x="448" y="32"/><use href="#g68" x="456" y="32"/><use href="#g61" x="464" y="32"/><use href="#g6e" x="472" y="32"/><use href="#g67" x="480" y="32"/><use href="#g65" x="488" y="32"/><use href="#g64" x="496" y="32"/><use href="#g74" x="512" y="32"/><use href="#g6f" x="520" y="32"/><use href="#g75" x="536" y="32"/><use href="#g73" x="544" y="32"/><use href="#g65" x="552" y="32"/><use href="#g73" x="568" y="32"/><use href="#g69" x="576" y="32"/><use href="#g67" x="584" y="32"/><use href="#g6e" x="592" y="32"/><use href="#g61" x="600" y="32"/><use href="#g6c" x="608" y="32"/><use href="#g28" x="616" y="32"/><use href="#g33" x="624" y="32"/><use href="#g29" x="632" y="32"/><use href="#g69" x="648" y="32"/><use href="#g6e" x="656" y="32"/>
<use href="#g2a" x="136" y="48"/><use href="#g74" x="152" y="48"/><use href="#g68" x="160" y="48"/><use href="#g65" x="168" y="48"/><use href="#g66" x="184" y="48"/><use href="#g75" x="192" y="48"/><use href="#g74" x="200" y="48"/><use href="#g75" x="208" y="48"/><use href="#g72" x="216" y="48"/><use href="#g65" x="224" y="48"/><use href="#g2e" x="232" y="48"/><use href="#g49" x="256" y="48"/><use href="#g66" x="264" y="48"/><use href="#g6e" x="280" y="48"/><use href="#g6f" x="288" y="48"/><use href="#g74" x="296" y="48"/><use href="#g68" x="304" y="48"/><use href="#g69" x="312" y="48"/><use href="#g6e" x="320" y="48"/><use href="#g67" x="328" y="48"/><use href="#g65" x="344" y="48"/><use href="#g6c" x="352" y="48"/><use href="#g73" x="360" y="48"/><use href="#g65" x="368" y="48"/><use href="#g2c" x="376" y="48"/><use href="#g69" x="392" y="48"/><use href="#g74" x="400" y="48"/><use href="#g27" x="408" y="48"/><use href="#g73" x="416" y="48"/><use href="#g73" x="432" y="48"/><use href="#g69" x="440" y="48"/><use href="#g6d" x="448" y="48"/><use href="#g70" x="456" y="48"/><use href="#g6c" x="464" y="48"/><use href="#g65" x="472" y="48"/><use href="#g72" x="480" y="48"/><use href="#g2e" x="488" y="48"/><use href="#g2e" x="496" y="48"/><use href="#g2e" x="504" y="48"/>
<use href="#g2a" x="136" y="64"/><use href="#g2f" x="144" y="64"/>
<use href="#gda" x="0" y="320"/><use href="#gc4" x="8" y="320"/><use href="#gc4" x="16" y="320"/><use href="#gc4" x="24" y="320"/><use href="#gc4" x="32" y="320"/><use href="#gc4" x="40" y="320"/><use href="#gc4" x="48" y="320"/><use href="#gc4" x="56" y="320"/><use href="#gc4" x="64" y="320"/><use href="#gc4" x="72" y="320"/><use href="#gc4" x="80" y="320"/><use href="#gc4" x="88" y="320"/><use href="#gc4" x="96" y="320"/><use href="#gc4" x="104" y="320"/><use href="#gc4" x="112" y="320"/><use href="#gc4" x="120" y="320"/><use href="#gc4" x="128" y="320"/><use href="#gc4" x="136" y="320"/><use href="#gc4" x="144" y="320"/><use href="#gc4" x="152" y="320"/><use href="#gc4" x="160" y="320"/><use href="#gc4" x="168" y="320"/><use href="#gc4" x="176" y="320"/><use href="#gc4" x="184" y="320"/><use href="#gc4" x="192" y="320"/><use href="#gc4" x="200" y="320"/><use href="#gc4" x="208" y="320"/><use href="#gc4" x="216" y="320"/><use href="#gc4" x="224" y="320"/><use href="#gc4" x="232" y="320"/><use href="#gc4" x="240" y="320"/><use href="#gc4" x="248" y="320"/><use href="#gc4" x="256" y="320"/><use href="#gc4" x="264" y="320"/><use href="#gc4" x="272" y="320"/><use href="#gc4" x="280" y="320"/><use href="#gc4" x="288" y="320"/><use href="#gc4" x="296" y="320"/><use href="#gc4" x="304" y="320"/><use href="#gc4" x="312" y="320"/><use href="#gc4" x="320" y="320"/><use href="#gc4" x="328" y="320"/><use href="#gc4" x="336" y="320"/><use href="#gc4" x="344" y="320"/><use href="#gc4" x="352" y="320"/><use href="#gc4" x="360" y="320"/><use href="#gc4" x="368" y="320"/><use href="#gc4" x="376" y="320"/><use href="#gc4" x="384" y="320"/><use href="#gc4" x="392" y="320"/><use href="#gc4" x="400" y="320"/><use href="#gc4" x="408" y="320"/><use href="#gc4" x="416" y="320"/><use href="#gc4" x="424" y="320"/><use href="#gc4" x="432" y="320"/><use href="#gc4" x="440" y="320"/><use href="#gc4" x="448" y="320"/><use href="#gc4" x="456" y="320"/><use href="#gc4" x="464" y="320"/><use href="#gc4" x="472" y="320"/><use href="#gc4" x="480" y="320"/><use href="#gc4" x="488" y="320"/><use href="#gc4" x="496" y="320"/><use href="#gc4" x="504" y="320"/><use href="#gc4" x="512" y="320"/><use href="#gc4" x="520" y="320"/><use href="#gc4" x="528" y="320"/><use href="#gc4" x="536" y="320"/><use href="#gc4" x="544" y="320"/><use href="#gc4" x="552" y="320"/><use href="#gc4" x="560" y="320"/><use href="#gc4" x="568" y="320"/><use href="#gc4" x="576" y="320"/><use href="#gc4" x="584" y="320"/><use href="#gc4" x="592" y="320"/><use href="#gc4" x="600" y="320"/><use href="#gc4" x="608" y="320"/><use href="#gc4" x="616" y="320"/><use href="#gc4" x="624" y="320"/><use href="#gc4" x="632" y="320"/><use href="#gc4" x="640" y="320"/><use href="#gc4" x="648" y="320"/><use href="#gc4" x="656" y="320"/><use href="#gc4" x="664" y="320"/><use href="#gc4" x="672" y="320"/><use href="#gc4" x="680" y="320"/><use href="#gc4" x="688" y="320"/><use href="#gc4" x="696" y="320"/><use href="#gc4" x="704" y="320"/><use href="#gc4" x="712" y="320"/><use href="#gc4" x="720" y="320"/><use href="#gc4" x="728" y="320"/><use href="#gc4" x="736" y="320"/><use href="#gc4" x="744" y="320"/><use href="#gc4" x="752" y="320"/><use href="#gc4" x="760" y="320"/><use href="#gc4" x="768" y="320"/><use href="#gc4" x="776" y="320"/><use href="#gc4" x="784" y="320"/><use href="#gc4" x="792" y="320"/><use href="#gc4" x="800" y="320"/><use href="#gc4" x="808" y="320"/><use href="#gc4" x="816" y="320"/><use href="#gc4" x="824" y="320"/><use href="#gc4" x="832" y="320"/><use href="#gc4" x="840" y="320"/><use href="#gc4" x="848" y="320"/><use href="#gc4" x="856" y="320"/><use href="#gc4" x="864" y="320"/><use href="#gc4" x="872" y="320"/><use href="#gc4" x="880" y="320"/><use href="#gc4" x="888" y="320"/><use href="#gc4" x="896" y="320"/><use href="#gc4" x="904" y="320"/><use href="#gc4" x="912" y="320"/><use href="#gc4" x="920" y="320"/><use href="#gc4" x="928" y="320"/><use href="#gc4" x="936" y="320"/><use href="#gc4" x="944" y="320"/><use href="#gc4" x="952" y="320"/><use href="#gc4" x="960" y="320"/><use href="#gc4" x="968" y="320"/><use href="#gc4" x="976" y="320"/><use href="#gc4" x="984" y="320"/><use href="#gc4" x="992" y="320"/><use href="#gc4" x="1000" y="320"/><use href="#gc4" x="1008" y="320"/><use href="#gc4" x="1016" y="320"/><use href="#gc4" x="1024" y="320"/><use href="#gc4" x="1032" y="320"/><use href="#gc4" x="1040" y="320"/><use href="#gc4" x="1048" y="320"/><use href="#gc4" x="1056" y="320"/><use href="#gc4" x="1064" y="320"/><use href="#gc4" x="1072" y="320"/><use href="#gc4" x="1080" y="320"/><use href="#gc4" x="1088" y="320"/><use href="#gc4" x="1096" y="320"/><use href="#gc4" x="1104" y="320"/><use href="#gc4" x="1112" y="320"/><use href="#gc4" x="1120" y="320"/><use href="#gc4" x="1128" y="320"/><use href="#gc4" x="1136" y="320"/><use href="#gc4" x="1144" y="320"/><use href="#gc4" x="1152" y="320"/><use href="#gc4" x="1160" y="320"/><use href="#gc4" x="1168" y="320"/><use href="#gc4" x="1176" y="320"/><use href="#gc4" x="1184" y="320"/><use href="#gc4" x="1192" y="320"/><use href="#gc4" x="1200" y="320"/><use href="#gc4" x="1208" y="320"/><use href="#gc4" x="1216" y="320"/><use href="#gc4" x="1224" y="320"/><use href="#gc4" x="1232" y="320"/><use href="#gc4" x="1240" y="320"/><use href="#gc4" x="1248" y="320"/><use href="#gc4" x="1256" y="320"/><use href="#gc4" x="1264" y="320"/><use href="#gbf" x="1272" y="320"/>
<use href="#gb3" x="0" y="336"/><use href="#gb3" x="1272" y="336"/>
<use href="#gb3" x="0" y="352"/><use href="#gb3" x="1272" y="352"/>
<use href="#gb3" x="0" y="368"/><use href="#gb3" x="1272" y="368"/>
<use href="#gb3" x="0" y="384"/><use href="#gb3" x="1272" y="384"/>
<use href="#gb3" x="0" y="400"/><use href="#gb3" x="1272" y="400"/>
<use href="#gb3" x="0" y="416"/><use href="#gb3" x="1272" y="416"/>
<use href="#gb3" x="0" y="432"/><use href="#gb3" x="1272" y="432"/>
<use href="#gb3" x="0" y="448"/><use href="#gb3" x="1272" y="448"/>
<use href="#gb3" x="0" y="464"/><use href="#gb3" x="1272" y="464"/>
<use href="#gb3" x="0" y="480"/><use href="#gb3" x="1272" y="480"/>
<use href="#gb3" x="0" y="496"/><use href="#gb3" x="1272" y="496"/>
<use href="#gb3" x="0" y="512"/><use href="#gb3" x="1272" y="512"/>
<use href="#gb3" x="0" y="528"/><use href="#gb3" x="1272" y="528"/>
<use href="#gb3" x="0" y="544"/><use href="#gb3" x="1272" y="544"/>
<use href="#gb3" x="0" y="560"/><use href="#gb3" x="1272" y="560"/>
<use href="#gb3" x="0" y="576"/><use href="#gb3" x="1272" y="576"/>
<use href="#gb3" x="0" y="592"/><use href="#gb3" x="1272" y="592"/>
<use href="#gb3" x="0" y="608"/><use href="#gb3" x="1272" y="608"/>
<use href="#gb3" x="0" y="624"/><use href="#gb3" x="1272" y="624"/>
<use href="#gb3" x="0" y="640"/><use href="#gb3" x="1272" y="640"/>
<use href="#gc0" x="0" y="656"/><use href="#gc4" x="8" y="656"/><use href="#gc4" x="16" y="656"/><use href="#gc4" x="24" y="656"/><use href="#gc4" x="32" y="656"/><use href="#gc4" x="40" y="656"/><use href="#gc4" x="48" y="656"/><use href="#gc4" x="56" y="656"/><use href="#gc4" x="64" y="656"/><use href="#gc4" x="72" y="656"/><use href="#gc4" x="80" y="656"/><use href="#gc4" x="88" y="656"/><use href="#gc4" x="96" y="656"/><use href="#gc4" x="104" y="656"/><use href="#gc4" x="112" y="656"/><use href="#gc4" x="120" y="656"/><use href="#gc4" x="128" y="656"/><use href="#gc4" x="136" y="656"/><use href="#gc4" x="144" y="656"/><use href="#gc4" x="152" y="656"/><use href="#gc4" x="160" y="656"/><use href="#gc4" x="168" y="656"/><use href="#gc4" x="176" y="656"/><use href="#gc4" x="184" y="656"/><use href="#gc4" x="192" y="656"/><use href="#gc4" x="200" y="656"/><use href="#gc4" x="208" y="656"/><use href="#gc4" x="216" y="656"/><use href="#gc4" x="224" y="656"/><use href="#gc4" x="232" y="656"/><use href="#gc4" x="240" y="656"/><use href="#gc4" x="248" y="656"/><use href="#gc4" x="256" y="656"/><use href="#gc4" x="264" y="656"/><use href="#gc4" x="272" y="656"/><use href="#gc4" x="280" y="656"/><use href="#gc4" x="288" y="656"/><use href="#gc4" x="296" y="656"/><use href="#gc4" x="304" y="656"/><use href="#gc4" x="312" y="656"/><use href="#gc4" x="320" y="656"/><use href="#gc4" x="328" y="656"/><use href="#gc4" x="336" y="656"/><use href="#gc4" x="344" y="656"/><use href="#gc4" x="352" y="656"/><use href="#gc4" x="360" y="656"/><use href="#gc4" x="368" y="656"/><use href="#gc4" x="376" y="656"/><use href="#gc4" x="384" y="656"/><use href="#gc4" x="392" y="656"/><use href="#gc4" x="400" y="656"/><use href="#gc4" x="408" y="656"/><use href="#gc4" x="416" y="656"/><use href="#gc4" x="424" y="656"/><use href="#gc4" x="432" y="656"/><use href="#gc4" x="440" y="656"/><use href="#gc4" x="448" y="656"/><use href="#gc4" x="456" y="656"/><use href="#gc4" x="464" y="656"/><use href="#gc4" x="472" y="656"/><use href="#gc4" x="480" y="656"/><use href="#gc4" x="488" y="656"/><use href="#gc4" x="496" y="656"/><use href="#gc4" x="504" y="656"/><use href="#gc4" x="512" y="656"/><use href="#gc4" x="520" y="656"/><use href="#gc4" x="528" y="656"/><use href="#gc4" x="536" y="656"/><use href="#gc4" x="544" y="656"/><use href="#gc4" x="552" y="656"/><use href="#gc4" x="560" y="656"/><use href="#gc4" x="568" y="656"/><use href="#gc4" x="576" y="656"/><use href="#gc4" x="584" y="656"/><use href="#gc4" x="592" y="656"/><use href="#gc4" x="600" y="656"/><use href="#gc4" x="608" y="656"/><use href="#gc4" x="616" y="656"/><use href="#gc4" x="624" y="656"/><use href="#gc4" x="632" y="656"/><use href="#gc4" x="640" y="656"/><use href="#gc4" x="648" y="656"/><use href="#gc4" x="656" y="656"/><use href="#gc4" x="664" y="656"/><use href="#gc4" x="672" y="656"/><use href="#gc4" x="680" y="656"/><use href="#gc4" x="688" y="656"/><use href="#gc4" x="696" y="656"/><use href="#gc4" x="704" y="656"/><use href="#gc4" x="712" y="656"/><use href="#gc4" x="720" y="656"/><use href="#gc4" x="728" y="656"/><use href="#gc4" x="736" y="656"/><use href="#gc4" x="744" y="656"/><use href="#gc4" x="752" y="656"/><use href="#gc4" x="760" y="656"/><use href="#gc4" x="768" y="656"/><use href="#gc4" x="776" y="656"/><use href="#gc4" x="784" y="656"/><use href="#gc4" x="792" y="656"/><use href="#gc4" x="800" y="656"/><use href="#gc4" x="808" y="656"/><use href="#gc4" x="816" y="656"/><use href="#gc4" x="824" y="656"/><use href="#gc4" x="832" y="656"/><use href="#gc4" x="840" y="656"/><use href="#gc4" x="848" y="656"/><use href="#gc4" x="856" y="656"/><use href="#gc4" x="864" y="656"/><use href="#gc4" x="872" y="656"/><use href="#gc4" x="880" y="656"/><use href="#gc4" x="888" y="656"/><use href="#gc4" x="896" y="656"/><use href="#gc4" x="904" y="656"/><use href="#gc4" x="912" y="656"/><use href="#gc4" x="920" y="656"/><use href="#gc4" x="928" y="656"/><use href="#gc4" x="936" y="656"/><use href="#gc4" x="944" y="656"/><use href="#gc4" x="952" y="656"/><use href="#gc4" x="960" y="656"/><use href="#gc4" x="968" y="656"/><use href="#gc4" x="976" y="656"/><use href="#gc4" x="984" y="656"/><use href="#gc4" x="992" y="656"/><use href="#gc4" x="1000" y="656"/><use href="#gc4" x="1008" y="656"/><use href="#gc4" x="1016" y="656"/><use href="#gc4" x="1024" y="656"/><use href="#gc4" x="1032" y="656"/><use href="#gc4" x="1040" y="656"/><use href="#gc4" x="1048" y="656"/><use href="#gc4" x="1056" y="656"/><use href="#gc4" x="1064" y="656"/><use href="#gc4" x="1072" y="656"/><use href="#gc4" x="1080" y="656"/><use href="#gc4" x="1088" y="656"/><use href="#gc4" x="1096" y="656"/><use href="#gc4" x="1104" y="656"/><use href="#gc4" x="1112" y="656"/><use href="#gc4" x="1120" y="656"/><use href="#gc4" x="1128" y="656"/><use href="#gc4" x="1136" y="656"/><use href="#gc4" x="1144" y="656"/><use href="#gc4" x="1152" y="656"/><use href="#gc4" x="1160" y="656"/><use href="#gc4" x="1168" y="656"/><use href="#gc4" x="1176" y="656"/><use href="#gc4" x="1184" y="656"/><use href="#gc4" x="1192" y="656"/><use href="#gc4" x="1200" y="656"/><use href="#gc4" x="1208" y="656"/><use href="#gc4" x="1216" y="656"/><use href="#gc4" x="1224" y="656"/><use href="#gc4" x="1232" y="656"/><use href="#gc4" x="1240" y="656"/><use href="#gc4" x="1248" y="656"/><use href="#gc4" x="1256" y="656"/><use href="#gc4" x="1264" y="656"/><use href="#gd9" x="1272" y="656"/>
<use href="#g64" x="240" y="752"/><use href="#g75" x="248" y="752"/><use href="#g6d" x="256" y="752"/><use href="#g6d" x="264" y="752"/><use href="#g79" x="272" y="752"/>
<use href="#g64" x="160" y="784"/><use href="#g75" x="168" y="784"/><use href="#g6d" x="176" y="784"/><use href="#g6d" x="184" y="784"/><use href="#g79" x="192" y="784"/>
<use href="#g73" x="288" y="832"/><use href="#g69" x="296" y="832"/><use href="#g67" x="304" y="832"/><use href="#g6e" x="312" y="832"/><use href="#g75" x="320" y="832"/><use href="#g6d" x="328" y="832"/>
<use href="#g66" x="248" y="864"/><use href="#g64" x="256" y="864"/><use href="#g73" x="264" y="864"/><use href="#g6e" x="376" y="864"/><use href="#g66" x="384" y="864"/><use href="#g64" x="392" y="864"/><use href="#g73" x="400" y="864"/><use href="#g74" x="440" y="864"/><use href="#g69" x="448" y="864"/><use href="#g6d" x="456" y="864"/><use href="#g65" x="464" y="864"/><use href="#g6f" x="472" y="864"/><use href="#g75" x="480" y="864"/><use href="#g74" x="488" y="864"/><use href="#g3d" x="496" y="864"/><use href="#g74" x="504" y="864"/><use href="#g69" x="512" y="864"/><use href="#g6d" x="520" y="864"/><use href="#g65" x="528" y="864"/><use href="#g6f" x="536" y="864"/><use href="#g75" x="544" y="864"/><use href="#g74" x="552" y="864"/><use href="#g40" x="560" y="864"/><use href="#g65" x="568" y="864"/><use href="#g6e" x="576" y="864"/><use href="#g74" x="584" y="864"/><use href="#g72" x="592" y="864"/><use href="#g79" x="600" y="864"/>
<use href="#g66" x="240" y="880"/><use href="#g64" x="248" y="880"/><use href="#g73" x="256" y="880"/><use href="#g3d" x="264" y="880"/><use href="#g66" x="272" y="880"/><use href="#g64" x="280" y="880"/><use href="#g73" x="288" y="880"/><use href="#g40" x="296" y="880"/><use href="#g65" x="304" y="880"/><use href="#g6e" x="312" y="880"/><use href="#g74" x="320" y="880"/><use href="#g72" x="328" y="880"/><use href="#g79" x="336" y="880"/><use href="#g6e" x="448" y="880"/><use href="#g66" x="456" y="880"/><use href="#g64" x="464" y="880"/><use href="#g73" x="472" y="880"/><use href="#g74" x="624" y="880"/><use href="#g69" x="632" y="880"/><use href="#g6d" x="640" y="880"/><use href="#g65" x="648" y="880"/><use href="#g6f" x="656" y="880"/><use href="#g75" x="664" y="880"/><use href="#g74" x="672" y="880"/><use href="#g3d" x="680" y="880"/><use href="#g74" x="688" y="880"/><use href="#g69" x="696" y="880"/><use href="#g6d" x="704" y="880"/><use href="#g65" x="712" y="880"/><use href="#g6f" x="720" y="880"/><use href="#g75" x="728" y="880"/><use href="#g74" x="736" y="880"/><use href="#g40" x="744" y="880"/><use href="#g65" x="752" y="880"/><use href="#g6e" x="760" y="880"/><use href="#g74" x="768" y="880"/><use href="#g72" x="776" y="880"/><use href="#g79" x="784" y="880"/><use href="#g66" x="848" y="880"/><use href="#g64" x="856" y="880"/><use href="#g73" x="864" y="880"/><use href="#g6c" x="872" y="880"/><use href="#g65" x="880" y="880"/><use href="#g6e" x="888" y="880"/><use href="#g3d" x="896" y="880"/><use href="#g66" x="904" y="880"/><use href="#g64" x="912" y="880"/><use href="#g73" x="920" y="880"/><use href="#g6c" x="928" y="880"/><use href="#g65" x="936" y="880"/><use href="#g6e" x="944" y="880"/><use href="#g40" x="952" y="880"/><use href="#g65" x="960" y="880"/><use href="#g6e" x="968" y="880"/><use href="#g74" x="976" y="880"/><use href="#g72" x="984" y="880"/><use href="#g79" x="992" y="880"/>
<use href="#g5f" x="192" y="896"/><use href="#g5f" x="200" y="896"/><use href="#g74" x="208" y="896"/><use href="#g69" x="216" y="896"/><use href="#g6d" x="224" y="896"/><use href="#g65" x="232" y="896"/><use href="#g6f" x="240" y="896"/><use href="#g75" x="248" y="896"/><use href="#g74" x="256" y="896"/><use href="#g5f" x="320" y="896"/><use href="#g5f" x="328" y="896"/><use href="#g6e" x="336" y="896"/><use href="#g66" x="344" y="896"/><use href="#g64" x="352" y="896"/><use href="#g73" x="360" y="896"/><use href="#g5f" x="512" y="896"/><use href="#g5f" x="520" y="896"/><use href="#g66" x="528" y="896"/><use href="#g64" x="536" y="896"/><use href="#g73" x="544" y="896"/>
<use href="#g73" x="160" y="912"/><use href="#g70" x="168" y="912"/><use href="#g3d" x="176" y="912"/><use href="#g73" x="184" y="912"/><use href="#g70" x="192" y="912"/><use href="#g40" x="200" y="912"/><use href="#g65" x="208" y="912"/><use href="#g6e" x="216" y="912"/><use href="#g74" x="224" y="912"/><use href="#g72" x="232" y="912"/><use href="#g79" x="240" y="912"/><use href="#g6d" x="352" y="912"/><use href="#g6f" x="360" y="912"/><use href="#g64" x="368" y="912"/><use href="#g65" x="376" y="912"/><use href="#g3d" x="384" y="912"/><use href="#g6d" x="392" y="912"/><use href="#g6f" x="400" y="912"/><use href="#g64" x="408" y="912"/><use href="#g65" x="416" y="912"/><use href="#g40" x="424" y="912"/><use href="#g65" x="432" y="912"/><use href="#g6e" x="440" y="912"/><use href="#g74" x="448" y="912"/><use href="#g72" x="456" y="912"/><use href="#g79" x="464" y="912"/><use href="#g6d" x="504" y="912"/><use href="#g69" x="512" y="912"/><use href="#g6c" x="520" y="912"/><use href="#g6c" x="528" y="912"/><use href="#g69" x="536" y="912"/><use href="#g73" x="544" y="912"/><use href="#g65" x="552" y="912"/><use href="#g63" x="560" y="912"/><use href="#g6f" x="568" y="912"/><use href="#g6e" x="576" y="912"/><use href="#g64" x="584" y="912"/><use href="#g73" x="592" y="912"/><use href="#g74" x="656" y="912"/><use href="#g69" x="664" y="912"/><use href="#g6d" x="672" y="912"/><use href="#g65" x="680" y="912"/><use href="#g6c" x="688" y="912"/><use href="#g65" x="696" y="912"/><use href="#g66" x="704" y="912"/><use href="#g74" x="712" y="912"/><use href="#g3d" x="720" y="912"/><use href="#g74" x="728" y="912"/><use href="#g69" x="736" y="912"/><use href="#g6d" x="744" y="912"/><use href="#g65" x="752" y="912"/><use href="#g6c" x="760" y="912"/><use href="#g65" x="768" y="912"/><use href="#g66" x="776" y="912"/><use href="#g74" x="784" y="912"/><use href="#g40" x="792" y="912"/><use href="#g65" x="800" y="912"/><use href="#g6e" x="808" y="912"/><use href="#g74" x="816" y="912"/><use href="#g72" x="824" y="912"/><use href="#g79" x="832" y="912"/>
<use href="#g64" x="320" y="928"/><use href="#g65" x="328" y="928"/><use href="#g6c" x="336" y="928"/><use href="#g61" x="344" y="928"/><use href="#g79" x="352" y="928"/><use href="#g73" x="504" y="928"/><use href="#g70" x="512" y="928"/>
<use href="#g77" x="128" y="944"/><use href="#g69" x="136" y="944"/><use href="#g6e" x="144" y="944"/><use href="#g3d" x="152" y="944"/><use href="#g77" x="160" y="944"/><use href="#g69" x="168" y="944"/><use href="#g6e" x="176" y="944"/><use href="#g40" x="184" y="944"/><use href="#g65" x="192" y="944"/><use href="#g6e" x="200" y="944"/><use href="#g74" x="208" y="944"/><use href="#g72" x="216" y="944"/><use href="#g79" x="224" y="944"/><use href="#g72" x="336" y="944"/><use href="#g65" x="344" y="944"/><use href="#g73" x="352" y="944"/><use href="#g75" x="360" y="944"/><use href="#g6c" x="368" y="944"/><use href="#g74" x="376" y="944"/><use href="#g3d" x="384" y="944"/><use href="#g72" x="392" y="944"/><use href="#g65" x="400" y="944"/><use href="#g73" x="408" y="944"/><use href="#g75" x="416" y="944"/><use href="#g6c" x="424" y="944"/><use href="#g74" x="432" y="944"/><use href="#g40" x="440" y="944"/><use href="#g65" x="448" y="944"/><use href="#g6e" x="456" y="944"/><use href="#g74" x="464" y="944"/><use href="#g72" x="472" y="944"/><use href="#g79" x="480" y="944"/><use href="#g75" x="592" y="944"/><use href="#g73" x="600" y="944"/><use href="#g65" x="608" y="944"/><use href="#g5f" x="616" y="944"/><use href="#g6d" x="624" y="944"/><use href="#g65" x="632" y="944"/><use href="#g74" x="640" y="944"/><use href="#g61" x="648" y="944"/>
<use href="#g77" x="208" y="960"/><use href="#g69" x="216" y="960"/><use href="#g6e" x="224" y="960"/>
</g>
<g fill="#5555ff">
<use href="#g23" x="128" y="96"/><use href="#g69" x="136" y="96"/><use href="#g66" x="144" y="96"/>
<use href="#g73" x="128" y="112"/><use href="#g74" x="136" y="112"/><use href="#g61" x="144" y="112"/><use href="#g74" x="152" y="112"/><use href="#g69" x="160" y="112"/><use href="#g63" x="168" y="112"/>
<use href="#g23" x="128" y="224"/><use href="#g69" x="136" y="224"/><use href="#g66" x="144" y="224"/><use href="#g64" x="152" y="224"/><use href="#g65" x="160" y="224"/><use href="#g66" x="168" y="224"/>
<use href="#g23" x="128" y="256"/><use href="#g65" x="136" y="256"/><use href="#g6e" x="144" y="256"/><use href="#g64" x="152" y="256"/><use href="#g69" x="160" y="256"/><use href="#g66" x="168" y="256"/>
</g>
<g fill="#00aa00">
<use href="#g76" x="184" y="112"/><use href="#g6f" x="192" y="112"/><use href="#g69" x="200" y="112"/><use href="#g64" x="208" y="112"/>
<use href="#g69" x="248" y="128"/><use href="#g6e" x="256" y="128"/><use href="#g74" x="264" y="128"/>
<use href="#g69" x="160" y="240"/><use href="#g6e" x="168" y="240"/><use href="#g74" x="176" y="240"/>
<use href="#g2e" x="200" y="704"/><use href="#g2e" x="208" y="704"/><use href="#g2f" x="216" y="704"/><use href="#g73" x="224" y="704"/><use href="#g79" x="232" y="704"/><use href="#g73" x="240" y="704"/><use href="#g64" x="248" y="704"/><use href="#g65" x="256" y="704"/><use href="#g70" x="264" y="704"/><use href="#g73" x="272" y="704"/><use href="#g2f" x="280" y="704"/><use href="#g75" x="288" y="704"/><use href="#g6e" x="296" y="704"/><use href="#g69" x="304" y="704"/><use href="#g78" x="312" y="704"/><use href="#g2f" x="320" y="704"/><use href="#g73" x="328" y="704"/><use href="#g79" x="336" y="704"/><use href="#g73" x="344" y="704"/><use href="#g63" x="352" y="704"/><use href="#g61" x="360" y="704"/><use href="#g6c" x="368" y="704"/><use href="#g6c" x="376" y="704"/><use href="#g2d" x="384" y="704"/><use href="#g74" x="392" y="704"/><use href="#g65" x="400" y="704"/><use href="#g6d" x="408" y="704"/><use href="#g70" x="416" y="704"/><use href="#g6c" x="424" y="704"/><use href="#g61" x="432" y="704"/><use href="#g74" x="440" y="704"/><use href="#g65" x="448" y="704"/><use href="#g2e" x="456" y="704"/><use href="#g53" x="464" y="704"/>
<use href="#g2e" x="344" y="752"/><use href="#g2e" x="352" y="752"/><use href="#g2f" x="360" y="752"/><use href="#g2e" x="368" y="752"/><use href="#g2e" x="376" y="752"/><use href="#g2f" x="384" y="752"/><use href="#g6e" x="392" y="752"/><use href="#g63" x="400" y="752"/><use href="#g75" x="408" y="752"/><use href="#g72" x="416" y="752"/><use href="#g73" x="424" y="752"/><use href="#g65" x="432" y="752"/><use href="#g73" x="440" y="752"/><use href="#g2f" x="448" y="752"/><use href="#g74" x="456" y="752"/><use href="#g74" x="464" y="752"/><use href="#g79" x="472" y="752"/><use href="#g2f" x="480" y="752"/><use href="#g6c" x="488" y="752"/><use href="#g69" x="496" y="752"/><use href="#g62" x="504" y="752"/><use href="#g5f" x="512" y="752"/><use href="#g74" x="520" y="752"/><use href="#g73" x="528" y="752"/><use href="#g74" x="536" y="752"/><use href="#g70" x="544" y="752"/><use href="#g2e" x="552" y="752"/><use href="#g63" x="560" y="752"/>
<use href="#g2e" x="264" y="784"/><use href="#g2e" x="272" y="784"/><use href="#g2f" x="280" y="784"/><use href="#g2e" x="288" y="784"/><use href="#g2e" x="296" y="784"/><use href="#g2f" x="304" y="784"/><use href="#g6e" x="312" y="784"/><use href="#g63" x="320" y="784"/><use href="#g75" x="328" y="784"/><use href="#g72" x="336" y="784"/><use href="#g73" x="344" y="784"/><use href="#g65" x="352" y="784"/><use href="#g73" x="360" y="784"/><use href="#g2f" x="368" y="784"/><use href="#g74" x="376" y="784"/><use href="#g74" x="384" y="784"/><use href="#g79" x="392" y="784"/><use href="#g2f" x="400" y="784"/><use href="#g6c" x="408" y="784"/><use href="#g69" x="416" y="784"/><use href="#g62" x="424" y="784"/><use href="#g5f" x="432" y="784"/><use href="#g74" x="440" y="784"/><use href="#g73" x="448" y="784"/><use href="#g74" x="456" y="784"/><use href="#g70" x="464" y="784"/><use href="#g2e" x="472" y="784"/><use href="#g63" x="480" y="784"/>
<use href="#g2e" x="232" y="816"/><use href="#g2e" x="240" y="816"/><use href="#g2f" x="248" y="816"/><use href="#g73" x="256" y="816"/><use href="#g79" x="264" y="816"/><use href="#g73" x="272" y="816"/><use href="#g64" x="280" y="816"/><use href="#g65" x="288" y="816"/><use href="#g70" x="296" y="816"/><use href="#g73" x="304" y="816"/><use href="#g2f" x="312" y="816"/><use href="#g75" x="320" y="816"/><use href="#g6e" x="328" y="816"/><use href="#g69" x="336" y="816"/><use href="#g78" x="344" y="816"/><use href="#g2f" x="352" y="816"/><use href="#g73" x="360" y="816"/><use href="#g79" x="368" y="816"/><use href="#g73" x="376" y="816"/><use href="#g63" x="384" y="816"/><use href="#g61" x="392" y="816"/><use href="#g6c" x="400" y="816"/><use href="#g6c" x="408" y="816"/><use href="#g2d" x="416" y="816"/><use href="#g74" x="424" y="816"/><use href="#g65" x="432" y="816"/><use href="#g6d" x="440" y="816"/><use href="#g70" x="448" y="816"/><use href="#g6c" x="456" y="816"/><use href="#g61" x="464" y="816"/><use href="#g74" x="472" y="816"/><use href="#g65" x="480" y="816"/><use href="#g2e" x="488" y="816"/><use href="#g53" x="496" y="816"/>
<use href="#g6c" x="504" y="832"/><use href="#g69" x="512" y="832"/><use href="#g62" x="520" y="832"/><use href="#g2f" x="528" y="832"/><use href="#g6c" x="536" y="832"/><use href="#g69" x="544" y="832"/><use href="#g62" x="552" y="832"/><use href="#g6c" x="560" y="832"/><use href="#g6f" x="568" y="832"/><use href="#g77" x="576" y="832"/><use href="#g2e" x="584" y="832"/><use href="#g63" x="592" y="832"/>
<use href="#g2e" x="688" y="864"/><use href="#g2e" x="696" y="864"/><use href="#g2f" x="704" y="864"/><use href="#g73" x="712" y="864"/><use href="#g79" x="720" y="864"/><use href="#g73" x="728" y="864"/><use href="#g64" x="736" y="864"/><use href="#g65" x="744" y="864"/><use href="#g70" x="752" y="864"/><use href="#g73" x="760" y="864"/><use href="#g2f" x="768" y="864"/><use href="#g75" x="776" y="864"/><use href="#g6e" x="784" y="864"/><use href="#g69" x="792" y="864"/><use href="#g78" x="800" y="864"/><use href="#g2f" x="808" y="864"/><use href="#g73" x="816" y="864"/><use href="#g79" x="824" y="864"/><use href="#g73" x="832" y="864"/><use href="#g76" x="840" y="864"/><use href="#g2f" x="848" y="864"/><use href="#g6c" x="856" y="864"/><use href="#g69" x="864" y="864"/><use href="#g6e" x="872" y="864"/><use href="#g75" x="880" y="864"/><use href="#g78" x="888" y="864"/><use href="#g2f" x="896" y="864"/><use href="#g70" x="904" y="864"/><use href="#g6f" x="912" y="864"/><use href="#g6c" x="920" y="864"/><use href="#g6c" x="928" y="864"/><use href="#g2e" x="936" y="864"/><use href="#g63" x="944" y="864"/>
<use href="#g70" x="1064" y="880"/><use href="#g6f" x="1072" y="880"/><use href="#g6c" x="1080" y="880"/><use href="#g6c" x="1088" y="880"/><use href="#g5f" x="1096" y="880"/><use href="#g63" x="1104" y="880"/><use href="#g68" x="1112" y="880"/><use href="#g6b" x="1120" y="880"/><use href="#g2e" x="1128" y="880"/><use href="#g63" x="1136" y="880"/>
<use href="#g2f" x="680" y="896"/><use href="#g75" x="688" y="896"/><use href="#g73" x="696" y="896"/><use href="#g72" x="704" y="896"/><use href="#g2f" x="712" y="896"/><use href="#g69" x="720" y="896"/><use href="#g6e" x="728" y="896"/><use href="#g63" x="736" y="896"/><use href="#g6c" x="744" y="896"/><use href="#g75" x="752" y="896"/><use href="#g64" x="760" y="896"/><use href="#g65" x="768" y="896"/><use href="#g2f" x="776" y="896"/><use href="#g78" x="784" y="896"/><use href="#g38" x="792" y="896"/><use href="#g36" x="800" y="896"/><use href="#g5f" x="808" y="896"/><use href="#g36" x="816" y="896"/><use href="#g34" x="824" y="896"/><use href="#g2d" x="832" y="896"/><use href="#g6c" x="840" y="896"/><use href="#g69" x="848" y="896"/><use href="#g6e" x="856" y="896"/><use href="#g75" x="864" y="896"/><use href="#g78" x="872" y="896"/><use href="#g2d" x="880" y="896"/><use href="#g67" x="888" y="896"/><use href="#g6e" x="896" y="896"/><use href="#g75" x="904" y="896"/><use href="#g78" x="912" y="896"/><use href="#g33" x="920" y="896"/><use href="#g32" x="928" y="896"/><use href="#g2f" x="936" y="896"/><use href="#g62" x="944" y="896"/><use href="#g69" x="952" y="896"/><use href="#g74" x="960" y="896"/><use href="#g73" x="968" y="896"/><use href="#g2f" x="976" y="896"/><use href="#g70" x="984" y="896"/><use href="#g6f" x="992" y="896"/><use href="#g6c" x="1000" y="896"/><use href="#g6c" x="1008" y="896"/><use href="#g32" x="1016" y="896"/><use href="#g2e" x="1024" y="896"/><use href="#g68" x="1032" y="896"/>
<use href="#g2e" x="912" y="912"/><use href="#g2e" x="920" y="912"/><use href="#g2f" x="928" y="912"/><use href="#g2e" x="936" y="912"/><use href="#g2e" x="944" y="912"/><use href="#g2f" x="952" y="912"/><use href="#g6e" x="960" y="912"/><use href="#g63" x="968" y="912"/><use href="#g75" x="976" y="912"/><use href="#g72" x="984" y="912"/><use href="#g73" x="992" y="912"/><use href="#g65" x="1000" y="912"/><use href="#g73" x="1008" y="912"/><use href="#g2f" x="1016" y="912"/><use href="#g74" x="1024" y="912"/><use href="#g74" x="1032" y="912"/><use href="#g79" x="1040" y="912"/><use href="#g2f" x="1048" y="912"/><use href="#g6c" x="1056" y="912"/><use href="#g69" x="1064" y="912"/><use href="#g62" x="1072" y="912"/><use href="#g5f" x="1080" y="912"/><use href="#g74" x="1088" y="912"/><use href="#g77" x="1096" y="912"/><use href="#g61" x="1104" y="912"/><use href="#g69" x="1112" y="912"/><use href="#g74" x="1120" y="912"/><use href="#g2e" x="1128" y="912"/><use href="#g63" x="1136" y="912"/>
<use href="#g2e" x="648" y="928"/><use href="#g2e" x="656" y="928"/><use href="#g2f" x="664" y="928"/><use href="#g2e" x="672" y="928"/><use href="#g2e" x="680" y="928"/><use href="#g2f" x="688" y="928"/><use href="#g6e" x="696" y="928"/><use href="#g63" x="704" y="928"/><use href="#g75" x="712" y="928"/><use href="#g72" x="720" y="928"/><use href="#g73" x="728" y="928"/><use href="#g65" x="736" y="928"/><use href="#g73" x="744" y="928"/><use href="#g2f" x="752" y="928"/><use href="#g62" x="760" y="928"/><use href="#g61" x="768" y="928"/><use href="#g73" x="776" y="928"/><use href="#g65" x="784" y="928"/><use href="#g2f" x="792" y="928"/><use href="#g6c" x="800" y="928"/><use href="#g69" x="808" y="928"/><use href="#g62" x="816" y="928"/><use href="#g5f" x="824" y="928"/><use href="#g67" x="832" y="928"/><use href="#g65" x="840" y="928"/><use href="#g74" x="848" y="928"/><use href="#g63" x="856" y="928"/><use href="#g68" x="864" y="928"/><use href="#g2e" x="872" y="928"/><use href="#g63" x="880" y="928"/>
<use href="#g2e" x="712" y="944"/><use href="#g2e" x="720" y="944"/><use href="#g2f" x="728" y="944"/><use href="#g2e" x="736" y="944"/><use href="#g2e" x="744" y="944"/><use href="#g2f" x="752" y="944"/><use href="#g6e" x="760" y="944"/><use href="#g63" x="768" y="944"/><use href="#g75" x="776" y="944"/><use href="#g72" x="784" y="944"/><use href="#g73" x="792" y="944"/><use href="#g65" x="800" y="944"/><use href="#g73" x="808" y="944"/><use href="#g2f" x="816" y="944"/><use href="#g62" x="824" y="944"/><use href="#g61" x="832" y="944"/><use href="#g73" x="840" y="944"/><use href="#g65" x="848" y="944"/><use href="#g2f" x="856" y="944"/><use href="#g6c" x="864" y="944"/><use href="#g69" x="872" y="944"/><use href="#g62" x="880" y="944"/><use href="#g5f" x="888" y="944"/><use href="#g67" x="896" y="944"/><use href="#g65" x="904" y="944"/><use href="#g74" x="912" y="944"/><use href="#g63" x="920" y="944"/><use href="#g68" x="928" y="944"/><use href="#g2e" x="936" y="944"/><use href="#g63" x="944" y="944"/>
<use href="#g2e" x="400" y="960"/><use href="#g2e" x="408" y="960"/><use href="#g2f" x="416" y="960"/><use href="#g2e" x="424" y="960"/><use href="#g2e" x="432" y="960"/><use href="#g2f" x="440" y="960"/><use href="#g6e" x="448" y="960"/><use href="#g63" x="456" y="960"/><use href="#g75" x="464" y="960"/><use href="#g72" x="472" y="960"/><use href="#g73" x="480" y="960"/><use href="#g65" x="488" y="960"/><use href="#g73" x="496" y="960"/><use href="#g2f" x="504" y="960"/><use href="#g62" x="512" y="960"/><use href="#g61" x="520" y="960"/><use href="#g73" x="528" y="960"/><use href="#g65" x="536" y="960"/><use href="#g2f" x="544" y="960"/><use href="#g6c" x="552" y="960"/><use href="#g69" x="560" y="960"/><use href="#g62" x="568" y="960"/><use href="#g5f" x="576" y="960"/><use href="#g67" x="584" y="960"/><use href="#g65" x="592" y="960"/><use href="#g74" x="600" y="960"/><use href="#g63" x="608" y="960"/><use href="#g68" x="616" y="960"/><use href="#g2e" x="624" y="960"/><use href="#g63" x="632" y="960"/>
</g>
<g fill="#ffffff">
<use href="#g68" x="128" y="128"/><use href="#g61" x="136" y="128"/><use href="#g6e" x="144" y="128"/><use href="#g64" x="152" y="128"/><use href="#g6c" x="160" y="128"/><use href="#g65" x="168" y="128"/><use href="#g5f" x="176" y="128"/><use href="#g53" x="184" y="128"/><use href="#g49" x="192" y="128"/><use href="#g47" x="200" y="128"/><use href="#g54" x="208" y="128"/><use href="#g53" x="216" y="128"/><use href="#g54" x="224" y="128"/><use href="#g50" x="232" y="128"/>
<use href="#g54" x="160" y="304"/>
</g>
<g fill="#aa0000">
<use href="#g28" x="240" y="128"/><use href="#g29" x="408" y="128"/>
<use href="#g7b" x="128" y="144"/>
<use href="#g2a" x="216" y="160"/><use href="#g3d" x="248" y="160"/><use href="#g3b" x="376" y="160"/>
<use href="#g2c" x="264" y="176"/><use href="#g3b" x="320" y="176"/>
<use href="#g2c" x="280" y="192"/><use href="#g3b" x="328" y="192"/>
<use href="#g3b" x="312" y="240"/>
<use href="#g2e" x="248" y="288"/><use href="#g3d" x="360" y="288"/><use href="#g3b" x="384" y="288"/>
<use href="#g28" x="168" y="304"/><use href="#g28" x="176" y="304"/><use href="#g22" x="184" y="304"/><use href="#g68" x="192" y="304"/><use href="#g61" x="200" y="304"/><use href="#g6e" x="208" y="304"/><use href="#g64" x="216" y="304"/><use href="#g6c" x="224" y="304"/><use href="#g65" x="232" y="304"/><use href="#g5f" x="240" y="304"/><use href="#g53" x="248" y="304"/><use href="#g49" x="256" y="304"/><use href="#g47" x="264" y="304"/><use href="#g54" x="272" y="304"/><use href="#g53" x="280" y="304"/><use href="#g54" x="288" y="304"/><use href="#g50" x="296" y="304"/><use href="#g28" x="304" y="304"/><use href="#g29" x="312" y="304"/><use href="#g63" x="328" y="304"/><use href="#g61" x="336" y="304"/><use href="#g6c" x="344" y="304"/><use href="#g6c" x="352" y="304"/><use href="#g65" x="360" y="304"/><use href="#g64" x="368" y="304"/><use href="#g22" x="376" y="304"/><use href="#g29" x="384" y="304"/><use href="#g29" x="392" y="304"/><use href="#g3b" x="400" y="304"/>
</g>
<g fill="#000000">
<use href="#g31" x="32" y="144"/><use href="#g33" x="40" y="144"/><use href="#g39" x="48" y="144"/>
<use href="#g3c" x="120" y="336"/><use href="#g3e" x="240" y="336"/><use href="#g70" x="288" y="336"/><use href="#g75" x="296" y="336"/><use href="#g73" x="304" y="336"/><use href="#g68" x="312" y="336"/><use href="#g72" x="344" y="336"/><use href="#g31" x="352" y="336"/><use href="#g34" x="360" y="336"/>
<use href="#g6d" x="0" y="672"/><use href="#g75" x="8" y="672"/><use href="#g6c" x="16" y="672"/><use href="#g74" x="24" y="672"/><use href="#g69" x="32" y="672"/><use href="#g2d" x="40" y="672"/><use href="#g74" x="48" y="672"/><use href="#g68" x="56" y="672"/><use href="#g72" x="64" y="672"/><use href="#g65" x="72" y="672"/><use href="#g54" x="88" y="672"/><use href="#g68" x="96" y="672"/><use href="#g72" x="104" y="672"/><use href="#g65" x="112" y="672"/><use href="#g61" x="120" y="672"/><use href="#g64" x="128" y="672"/><use href="#g30" x="144" y="672"/><use href="#g78" x="152" y="672"/><use href="#g66" x="160" y="672"/><use href="#g36" x="168" y="672"/><use href="#g66" x="176" y="672"/><use href="#g66" x="184" y="672"/><use href="#g33" x="192" y="672"/><use href="#g37" x="200" y="672"/><use href="#g34" x="208" y="672"/><use href="#g30" x="216" y="672"/><use href="#g28" x="232" y="672"/><use href="#g49" x="248" y="672"/><use href="#g6e" x="256" y="672"/><use href="#g3a" x="264" y="672"/><use href="#g68" x="280" y="672"/><use href="#g61" x="288" y="672"/><use href="#g6e" x="296" y="672"/><use href="#g64" x="304" y="672"/><use href="#g6c" x="312" y="672"/><use href="#g65" x="320" y="672"/><use href="#g5f" x="328" y="672"/><use href="#g53" x="336" y="672"/><use href="#g49" x="344" y="672"/><use href="#g47" x="352" y="672"/><use href="#g54" x="360" y="672"/><use href="#g53" x="368" y="672"/><use href="#g54" x="376" y="672"/><use href="#g50" x="384" y="672"/><use href="#g4c" x="1112" y="672"/><use href="#g31" x="1120" y="672"/><use href="#g33" x="1128" y="672"/><use href="#g39" x="1136" y="672"/><use href="#g50" x="1160" y="672"/><use href="#g43" x="1168" y="672"/><use href="#g3a" x="1176" y="672"/><use href="#g30" x="1192" y="672"/><use href="#g78" x="1200" y="672"/><use href="#g66" x="1208" y="672"/><use href="#g37" x="1216" y="672"/><use href="#g39" x="1224" y="672"/><use href="#g64" x="1232" y="672"/><use href="#g36" x="1240" y="672"/><use href="#g36" x="1248" y="672"/><use href="#g36" x="1256" y="672"/><use href="#g30" x="1264" y="672"/>
</g>
<g fill="#aa00aa">
<use href="#g31" x="376" y="288"/>
</g>
<g fill="#0000aa">
<use href="#g30" x="32" y="336"/><use href="#g78" x="40" y="336"/><use href="#g66" x="48" y="336"/><use href="#g37" x="56" y="336"/><use href="#g39" x="64" y="336"/><use href="#g64" x="72" y="336"/><use href="#g36" x="80" y="336"/><use href="#g36" x="88" y="336"/><use href="#g36" x="96" y="336"/><use href="#g30" x="104" y="336"/>
<use href="#g30" x="32" y="352"/><use href="#g78" x="40" y="352"/><use href="#g66" x="48" y="352"/><use href="#g37" x="56" y="352"/><use href="#g39" x="64" y="352"/><use href="#g64" x="72" y="352"/><use href="#g36" x="80" y="352"/><use href="#g36" x="88" y="352"/><use href="#g36" x="96" y="352"/><use href="#g32" x="104" y="352"/>
<use href="#g30" x="32" y="368"/><use href="#g78" x="40" y="368"/><use href="#g66" x="48" y="368"/><use href="#g37" x="56" y="368"/><use href="#g39" x="64" y="368"/><use href="#g64" x="72" y="368"/><use href="#g36" x="80" y="368"/><use href="#g36" x="88" y="368"/><use href="#g36" x="96" y="368"/><use href="#g34" x="104" y="368"/>
<use href="#g30" x="32" y="384"/><use href="#g78" x="40" y="384"/><use href="#g66" x="48" y="384"/><use href="#g37" x="56" y="384"/><use href="#g39" x="64" y="384"/><use href="#g64" x="72" y="384"/><use href="#g36" x="80" y="384"/><use href="#g36" x="88" y="384"/><use href="#g36" x="96" y="384"/><use href="#g36" x="104" y="384"/>
<use href="#g30" x="32" y="400"/><use href="#g78" x="40" y="400"/><use href="#g66" x="48" y="400"/><use href="#g37" x="56" y="400"/><use href="#g39" x="64" y="400"/><use href="#g64" x="72" y="400"/><use href="#g36" x="80" y="400"/><use href="#g36" x="88" y="400"/><use href="#g36" x="96" y="400"/><use href="#g39" x="104" y="400"/>
<use href="#g30" x="32" y="416"/><use href="#g78" x="40" y="416"/><use href="#g66" x="48" y="416"/><use href="#g37" x="56" y="416"/><use href="#g39" x="64" y="416"/><use href="#g64" x="72" y="416"/><use href="#g36" x="80" y="416"/><use href="#g36" x="88" y="416"/><use href="#g36" x="96" y="416"/><use href="#g61" x="104" y="416"/>
<use href="#g30" x="32" y="432"/><use href="#g78" x="40" y="432"/><use href="#g66" x="48" y="432"/><use href="#g37" x="56" y="432"/><use href="#g39" x="64" y="432"/><use href="#g64" x="72" y="432"/><use href="#g36" x="80" y="432"/><use href="#g36" x="88" y="432"/><use href="#g36" x="96" y="432"/><use href="#g62" x="104" y="432"/>
<use href="#g30" x="32" y="448"/><use href="#g78" x="40" y="448"/><use href="#g66" x="48" y="448"/><use href="#g37" x="56" y="448"/><use href="#g39" x="64" y="448"/><use href="#g64" x="72" y="448"/><use href="#g36" x="80" y="448"/><use href="#g36" x="88" y="448"/><use href="#g37" x="96" y="448"/><use href="#g31" x="104" y="448"/><use href="#g30" x="640" y="448"/><use href="#g78" x="648" y="448"/><use href="#g66" x="656" y="448"/><use href="#g37" x="664" y="448"/><use href="#g39" x="672" y="448"/><use href="#g66" x="680" y="448"/><use href="#g31" x="688" y="448"/><use href="#g66" x="696" y="448"/><use href="#g34" x="704" y="448"/><use href="#g38" x="712" y="448"/>
<use href="#g30" x="32" y="464"/><use href="#g78" x="40" y="464"/><use href="#g66" x="48" y="464"/><use href="#g37" x="56" y="464"/><use href="#g39" x="64" y="464"/><use href="#g64" x="72" y="464"/><use href="#g36" x="80" y="464"/><use href="#g36" x="88" y="464"/><use href="#g37" x="96" y="464"/><use href="#g37" x="104" y="464"/>
<use href="#g30" x="32" y="480"/><use href="#g78" x="40" y="480"/><use href="#g66" x="48" y="480"/><use href="#g37" x="56" y="480"/><use href="#g39" x="64" y="480"/><use href="#g64" x="72" y="480"/><use href="#g36" x="80" y="480"/><use href="#g36" x="88" y="480"/><use href="#g37" x="96" y="480"/><use href="#g66" x="104" y="480"/>
<use href="#g30" x="32" y="496"/><use href="#g78" x="40" y="496"/><use href="#g66" x="48" y="496"/><use href="#g37" x="56" y="496"/><use href="#g39" x="64" y="496"/><use href="#g64" x="72" y="496"/><use href="#g36" x="80" y="496"/><use href="#g36" x="88" y="496"/><use href="#g38" x="96" y="496"/><use href="#g36" x="104" y="496"/>
<use href="#g30" x="32" y="512"/><use href="#g78" x="40" y="512"/><use href="#g66" x="48" y="512"/><use href="#g37" x="56" y="512"/><use href="#g39" x="64" y="512"/><use href="#g64" x="72" y="512"/><use href="#g36" x="80" y="512"/><use href="#g36" x="88" y="512"/><use href="#g38" x="96" y="512"/><use href="#g38" x="104" y="512"/><use href="#g30" x="640" y="512"/><use href="#g78" x="648" y="512"/><use href="#g66" x="656" y="512"/><use href="#g37" x="664" y="512"/><use href="#g39" x="672" y="512"/><use href="#g66" x="680" y="512"/><use href="#g31" x="688" y="512"/><use href="#g66" x="696" y="512"/><use href="#g62" x="704" y="512"/><use href="#g38" x="712" y="512"/>
<use href="#g30" x="32" y="528"/><use href="#g78" x="40" y="528"/><use href="#g66" x="48" y="528"/><use href="#g37" x="56" y="528"/><use href="#g39" x="64" y="528"/><use href="#g64" x="72" y="528"/><use href="#g36" x="80" y="528"/><use href="#g36" x="88" y="528"/><use href="#g38" x="96" y="528"/><use href="#g65" x="104" y="528"/>
<use href="#g30" x="32" y="544"/><use href="#g78" x="40" y="544"/><use href="#g66" x="48" y="544"/><use href="#g37" x="56" y="544"/><use href="#g39" x="64" y="544"/><use href="#g64" x="72" y="544"/><use href="#g36" x="80" y="544"/><use href="#g36" x="88" y="544"/><use href="#g39" x="96" y="544"/><use href="#g35" x="104" y="544"/>
<use href="#g30" x="32" y="560"/><use href="#g78" x="40" y="560"/><use href="#g66" x="48" y="560"/><use href="#g37" x="56" y="560"/><use href="#g39" x="64" y="560"/><use href="#g64" x="72" y="560"/><use href="#g36" x="80" y="560"/><use href="#g36" x="88" y="560"/><use href="#g39" x="96" y="560"/><use href="#g38" x="104" y="560"/>
<use href="#g30" x="32" y="576"/><use href="#g78" x="40" y="576"/><use href="#g66" x="48" y="576"/><use href="#g37" x="56" y="576"/><use href="#g39" x="64" y="576"/><use href="#g64" x="72" y="576"/><use href="#g36" x="80" y="576"/><use href="#g36" x="88" y="576"/><use href="#g39" x="96" y="576"/><use href="#g61" x="104" y="576"/><use href="#g30" x="344" y="576"/><use href="#g78" x="352" y="576"/><use href="#g66" x="360" y="576"/><use href="#g37" x="368" y="576"/><use href="#g39" x="376" y="576"/><use href="#g64" x="384" y="576"/><use href="#g36" x="392" y="576"/><use href="#g36" x="400" y="576"/><use href="#g61" x="408" y="576"/><use href="#g64" x="416" y="576"/>
<use href="#g30" x="32" y="592"/><use href="#g78" x="40" y="592"/><use href="#g66" x="48" y="592"/><use href="#g37" x="56" y="592"/><use href="#g39" x="64" y="592"/><use href="#g64" x="72" y="592"/><use href="#g36" x="80" y="592"/><use href="#g36" x="88" y="592"/><use href="#g39" x="96" y="592"/><use href="#g63" x="104" y="592"/>
<use href="#g30" x="32" y="608"/><use href="#g78" x="40" y="608"/><use href="#g66" x="48" y="608"/><use href="#g37" x="56" y="608"/><use href="#g39" x="64" y="608"/><use href="#g64" x="72" y="608"/><use href="#g36" x="80" y="608"/><use href="#g36" x="88" y="608"/><use href="#g61" x="96" y="608"/><use href="#g34" x="104" y="608"/>
<use href="#g30" x="32" y="624"/><use href="#g78" x="40" y="624"/><use href="#g66" x="48" y="624"/><use href="#g37" x="56" y="624"/><use href="#g39" x="64" y="624"/><use href="#g64" x="72" y="624"/><use href="#g36" x="80" y="624"/><use href="#g36" x="88" y="624"/><use href="#g61" x="96" y="624"/><use href="#g37" x="104" y="624"/><use href="#g30" x="344" y="624"/><use href="#g78" x="352" y="624"/><use href="#g66" x="360" y="624"/><use href="#g37" x="368" y="624"/><use href="#g39" x="376" y="624"/><use href="#g64" x="384" y="624"/><use href="#g36" x="392" y="624"/><use href="#g38" x="400" y="624"/><use href="#g33" x="408" y="624"/><use href="#g30" x="416" y="624"/>
<use href="#g30" x="32" y="640"/><use href="#g78" x="40" y="640"/><use href="#g66" x="48" y="640"/><use href="#g37" x="56" y="640"/><use href="#g39" x="64" y="640"/><use href="#g64" x="72" y="640"/><use href="#g36" x="80" y="640"/><use href="#g36" x="88" y="640"/><use href="#g61" x="96" y="640"/><use href="#g64" x="104" y="640"/>
<use href="#g30" x="0" y="704"/><use href="#g78" x="8" y="704"/><use href="#g66" x="16" y="704"/><use href="#g37" x="24" y="704"/><use href="#g32" x="32" y="704"/><use href="#g30" x="40" y="704"/><use href="#g66" x="48" y="704"/><use href="#g39" x="56" y="704"/><use href="#g37" x="64" y="704"/><use href="#g37" x="72" y="704"/>
<use href="#g30" x="32" y="816"/><use href="#g78" x="40" y="816"/><use href="#g66" x="48" y="816"/><use href="#g37" x="56" y="816"/><use href="#g32" x="64" y="816"/><use href="#g30" x="72" y="816"/><use href="#g66" x="80" y="816"/><use href="#g39" x="88" y="816"/><use href="#g37" x="96" y="816"/><use href="#g37" x="104" y="816"/>
<use href="#g30" x="32" y="832"/><use href="#g78" x="40" y="832"/><use href="#g66" x="48" y="832"/><use href="#g35" x="56" y="832"/><use href="#g65" x="64" y="832"/><use href="#g30" x="72" y="832"/><use href="#g39" x="80" y="832"/><use href="#g66" x="88" y="832"/><use href="#g35" x="96" y="832"/><use href="#g62" x="104" y="832"/>
<use href="#g30" x="32" y="864"/><use href="#g78" x="40" y="864"/><use href="#g66" x="48" y="864"/><use href="#g37" x="56" y="864"/><use href="#g32" x="64" y="864"/><use href="#g63" x="72" y="864"/><use href="#g35" x="80" y="864"/><use href="#g33" x="88" y="864"/><use href="#g38" x="96" y="864"/><use href="#g33" x="104" y="864"/>
<use href="#g30" x="32" y="880"/><use href="#g78" x="40" y="880"/><use href="#g66" x="48" y="880"/><use href="#g37" x="56" y="880"/><use href="#g32" x="64" y="880"/><use href="#g64" x="72" y="880"/><use href="#g65" x="80" y="880"/><use href="#g61" x="88" y="880"/><use href="#g36" x="96" y="880"/><use href="#g63" x="104" y="880"/>
<use href="#g30" x="32" y="896"/><use href="#g78" x="40" y="896"/><use href="#g66" x="48" y="896"/><use href="#g37" x="56" y="896"/><use href="#g39" x="64" y="896"/><use href="#g61" x="72" y="896"/><use href="#g35" x="80" y="896"/><use href="#g63" x="88" y="896"/><use href="#g65" x="96" y="896"/><use href="#g34" x="104" y="896"/>
<use href="#g30" x="32" y="928"/><use href="#g78" x="40" y="928"/><use href="#g66" x="48" y="928"/><use href="#g37" x="56" y="928"/><use href="#g39" x="64" y="928"/><use href="#g63" x="72" y="928"/><use href="#g62" x="80" y="928"/><use href="#g35" x="88" y="928"/><use href="#g66" x="96" y="928"/><use href="#g61" x="104" y="928"/>
<use href="#g30" x="32" y="960"/><use href="#g78" x="40" y="960"/><use href="#g66" x="48" y="960"/><use href="#g37" x="56" y="960"/><use href="#g39" x="64" y="960"/><use href="#g63" x="72" y="960"/><use href="#g63" x="80" y="960"/><use href="#g30" x="88" y="960"/><use href="#g39" x="96" y="960"/><use href="#g33" x="104" y="960"/>
<use href="#g30" x="32" y="976"/><use href="#g78" x="40" y="976"/><use href="#g35" x="48" y="976"/><use href="#g36" x="56" y="976"/><use href="#g36" x="64" y="976"/><use href="#g30" x="72" y="976"/><use href="#g66" x="80" y="976"/><use href="#g65" x="88" y="976"/><use href="#g35" x="96" y="976"/><use href="#g38" x="104" y="976"/>
<use href="#g30" x="32" y="992"/><use href="#g78" x="40" y="992"/><use href="#g35" x="48" y="992"/><use href="#g36" x="56" y="992"/><use href="#g35" x="64" y="992"/><use href="#g65" x="72" y="992"/><use href="#g35" x="80" y="992"/><use href="#g38" x="88" y="992"/><use href="#g64" x="96" y="992"/><use href="#g34" x="104" y="992"/>
</g>
<g fill="#aa5500">
<use href="#g68" x="128" y="336"/><use href="#g61" x="136" y="336"/><use href="#g6e" x="144" y="336"/><use href="#g64" x="152" y="336"/><use href="#g6c" x="160" y="336"/><use href="#g65" x="168" y="336"/><use href="#g5f" x="176" y="336"/><use href="#g53" x="184" y="336"/><use href="#g49" x="192" y="336"/><use href="#g47" x="200" y="336"/><use href="#g54" x="208" y="336"/><use href="#g53" x="216" y="336"/><use href="#g54" x="224" y="336"/><use href="#g50" x="232" y="336"/>
<use href="#g68" x="128" y="352"/><use href="#g61" x="136" y="352"/><use href="#g6e" x="144" y="352"/><use href="#g64" x="152" y="352"/><use href="#g6c" x="160" y="352"/><use href="#g65" x="168" y="352"/><use href="#g5f" x="176" y="352"/><use href="#g53" x="184" y="352"/><use href="#g49" x="192" y="352"/><use href="#g47" x="200" y="352"/><use href="#g54" x="208" y="352"/><use href="#g53" x="216" y="352"/><use href="#g54" x="224" y="352"/><use href="#g50" x="232" y="352"/>
<use href="#g68" x="128" y="368"/><use href="#g61" x="136" y="368"/><use href="#g6e" x="144" y="368"/><use href="#g64" x="152" y="368"/><use href="#g6c" x="160" y="368"/><use href="#g65" x="168" y="368"/><use href="#g5f" x="176" y="368"/><use href="#g53" x="184" y="368"/><use href="#g49" x="192" y="368"/><use href="#g47" x="200" y="368"/><use href="#g54" x="208" y="368"/><use href="#g53" x="216" y="368"/><use href="#g54" x="224" y="368"/><use href="#g50" x="232" y="368"/>
<use href="#g68" x="128" y="384"/><use href="#g61" x="136" y="384"/><use href="#g6e" x="144" y="384"/><use href="#g64" x="152" y="384"/><use href="#g6c" x="160" y="384"/><use href="#g65" x="168" y="384"/><use href="#g5f" x="176" y="384"/><use href="#g53" x="184" y="384"/><use href="#g49" x="192" y="384"/><use href="#g47" x="200" y="384"/><use href="#g54" x="208" y="384"/><use href="#g53" x="216" y="384"/><use href="#g54" x="224" y="384"/><use href="#g50" x="232" y="384"/>
<use href="#g68" x="128" y="400"/><use href="#g61" x="136" y="400"/><use href="#g6e" x="144" y="400"/><use href="#g64" x="152" y="400"/><use href="#g6c" x="160" y="400"/><use href="#g65" x="168" y="400"/><use href="#g5f" x="176" y="400"/><use href="#g53" x="184" y="400"/><use href="#g49" x="192" y="400"/><use href="#g47" x="200" y="400"/><use href="#g54" x="208" y="400"/><use href="#g53" x="216" y="400"/><use href="#g54" x="224" y="400"/><use href="#g50" x="232" y="400"/>
<use href="#g68" x="128" y="416"/><use href="#g61" x="136" y="416"/><use href="#g6e" x="144" y="416"/><use href="#g64" x="152" y="416"/><use href="#g6c" x="160" y="416"/><use href="#g65" x="168" y="416"/><use href="#g5f" x="176" y="416"/><use href="#g53" x="184" y="416"/><use href="#g49" x="192" y="416"/><use href="#g47" x="200" y="416"/><use href="#g54" x="208" y="416"/><use href="#g53" x="216" y="416"/><use href="#g54" x="224" y="416"/><use href="#g50" x="232" y="416"/>
<use href="#g68" x="128" y="432"/><use href="#g61" x="136" y="432"/><use href="#g6e" x="144" y="432"/><use href="#g64" x="152" y="432"/><use href="#g6c" x="160" y="432"/><use href="#g65" x="168" y="432"/><use href="#g5f" x="176" y="432"/><use href="#g53" x="184" y="432"/><use href="#g49" x="192" y="432"/><use href="#g47" x="200" y="432"/><use href="#g54" x="208" y="432"/><use href="#g53" x="216" y="432"/><use href="#g54" x="224" y="432"/><use href="#g50" x="232" y="432"/>
<use href="#g68" x="128" y="448"/><use href="#g61" x="136" y="448"/><use href="#g6e" x="144" y="448"/><use href="#g64" x="152" y="448"/><use href="#g6c" x="160" y="448"/><use href="#g65" x="168" y="448"/><use href="#g5f" x="176" y="448"/><use href="#g53" x="184" y="448"/><use href="#g49" x="192" y="448"/><use href="#g47" x="200" y="448"/><use href="#g54" x="208" y="448"/><use href="#g53" x="216" y="448"/><use href="#g54" x="224" y="448"/><use href="#g50" x="232" y="448"/>
<use href="#g68" x="128" y="464"/><use href="#g61" x="136" y="464"/><use href="#g6e" x="144" y="464"/><use href="#g64" x="152" y="464"/><use href="#g6c" x="160" y="464"/><use href="#g65" x="168" y="464"/><use href="#g5f" x="176" y="464"/><use href="#g53" x="184" y="464"/><use href="#g49" x="192" y="464"/><use href="#g47" x="200" y="464"/><use href="#g54" x="208" y="464"/><use href="#g53" x="216" y="464"/><use href="#g54" x="224" y="464"/><use href="#g50" x="232" y="464"/>
<use href="#g68" x="128" y="480"/><use href="#g61" x="136" y="480"/><use href="#g6e" x="144" y="480"/><use href="#g64" x="152" y="480"/><use href="#g6c" x="160" y="480"/><use href="#g65" x="168" y="480"/><use href="#g5f" x="176" y="480"/><use href="#g53" x="184" y="480"/><use href="#g49" x="192" y="480"/><use href="#g47" x="200" y="480"/><use href="#g54" x="208" y="480"/><use href="#g53" x="216" y="480"/><use href="#g54" x="224" y="480"/><use href="#g50" x="232" y="480"/>
<use href="#g68" x="128" y="496"/><use href="#g61" x="136" y="496"/><use href="#g6e" x="144" y="496"/><use href="#g64" x="152" y="496"/><use href="#g6c" x="160" y="496"/><use href="#g65" x="168" y="496"/><use href="#g5f" x="176" y="496"/><use href="#g53" x="184" y="496"/><use href="#g49" x="192" y="496"/><use href="#g47" x="200" y="496"/><use href="#g54" x="208" y="496"/><use href="#g53" x="216" y="496"/><use href="#g54" x="224" y="496"/><use href="#g50" x="232" y="496"/>
<use href="#g68" x="128" y="512"/><use href="#g61" x="136" y="512"/><use href="#g6e" x="144" y="512"/><use href="#g64" x="152" y="512"/><use href="#g6c" x="160" y="512"/><use href="#g65" x="168" y="512"/><use href="#g5f" x="176" y="512"/><use href="#g53" x="184" y="512"/><use href="#g49" x="192" y="512"/><use href="#g47" x="200" y="512"/><use href="#g54" x="208" y="512"/><use href="#g53" x="216" y="512"/><use href="#g54" x="224" y="512"/><use href="#g50" x="232" y="512"/>
<use href="#g68" x="128" y="528"/><use href="#g61" x="136" y="528"/><use href="#g6e" x="144" y="528"/><use href="#g64" x="152" y="528"/><use href="#g6c" x="160" y="528"/><use href="#g65" x="168" y="528"/><use href="#g5f" x="176" y="528"/><use href="#g53" x="184" y="528"/><use href="#g49" x="192" y="528"/><use href="#g47" x="200" y="528"/><use href="#g54" x="208" y="528"/><use href="#g53" x="216" y="528"/><use href="#g54" x="224" y="528"/><use href="#g50" x="232" y="528"/>
<use href="#g68" x="128" y="544"/><use href="#g61" x="136" y="544"/><use href="#g6e" x="144" y="544"/><use href="#g64" x="152" y="544"/><use href="#g6c" x="160" y="544"/><use href="#g65" x="168" y="544"/><use href="#g5f" x="176" y="544"/><use href="#g53" x="184" y="544"/><use href="#g49" x="192" y="544"/><use href="#g47" x="200" y="544"/><use href="#g54" x="208" y="544"/><use href="#g53" x="216" y="544"/><use href="#g54" x="224" y="544"/><use href="#g50" x="232" y="544"/>
<use href="#g68" x="128" y="560"/><use href="#g61" x="136" y="560"/><use href="#g6e" x="144" y="560"/><use href="#g64" x="152" y="560"/><use href="#g6c" x="160" y="560"/><use href="#g65" x="168" y="560"/><use href="#g5f" x="176" y="560"/><use href="#g53" x="184" y="560"/><use href="#g49" x="192" y="560"/><use href="#g47" x="200" y="560"/><use href="#g54" x="208" y="560"/><use href="#g53" x="216" y="560"/><use href="#g54" x="224" y="560"/><use href="#g50" x="232" y="560"/>
<use href="#g68" x="128" y="576"/><use href="#g61" x="136" y="576"/><use href="#g6e" x="144" y="576"/><use href="#g64" x="152" y="576"/><use href="#g6c" x="160" y="576"/><use href="#g65" x="168" y="576"/><use href="#g5f" x="176" y="576"/><use href="#g53" x="184" y="576"/><use href="#g49" x="192" y="576"/><use href="#g47" x="200" y="576"/><use href="#g54" x="208" y="576"/><use href="#g53" x="216" y="576"/><use href="#g54" x="224" y="576"/><use href="#g50" x="232" y="576"/><use href="#g68" x="440" y="576"/><use href="#g61" x="448" y="576"/><use href="#g6e" x="456" y="576"/><use href="#g64" x="464" y="576"/><use href="#g6c" x="472" y="576"/><use href="#g65" x="480" y="576"/><use href="#g5f" x="488" y="576"/><use href="#g53" x="496" y="576"/><use href="#g49" x="504" y="576"/><use href="#g47" x="512" y="576"/><use href="#g54" x="520" y="576"/><use href="#g53" x="528" y="576"/><use href="#g54" x="536" y="576"/><use href="#g50" x="544" y="576"/>
<use href="#g68" x="128" y="592"/><use href="#g61" x="136" y="592"/><use href="#g6e" x="144" y="592"/><use href="#g64" x="152" y="592"/><use href="#g6c" x="160" y="592"/><use href="#g65" x="168" y="592"/><use href="#g5f" x="176" y="592"/><use href="#g53" x="184" y="592"/><use href="#g49" x="192" y="592"/><use href="#g47" x="200" y="592"/><use href="#g54" x="208" y="592"/><use href="#g53" x="216" y="592"/><use href="#g54" x="224" y="592"/><use href="#g50" x="232" y="592"/>
<use href="#g68" x="128" y="608"/><use href="#g61" x="136" y="608"/><use href="#g6e" x="144" y="608"/><use href="#g64" x="152" y="608"/><use href="#g6c" x="160" y="608"/><use href="#g65" x="168" y="608"/><use href="#g5f" x="176" y="608"/><use href="#g53" x="184" y="608"/><use href="#g49" x="192" y="608"/><use href="#g47" x="200" y="608"/><use href="#g54" x="208" y="608"/><use href="#g53" x="216" y="608"/><use href="#g54" x="224" y="608"/><use href="#g50" x="232" y="608"/>
<use href="#g68" x="128" y="624"/><use href="#g61" x="136" y="624"/><use href="#g6e" x="144" y="624"/><use href="#g64" x="152" y="624"/><use href="#g6c" x="160" y="624"/><use href="#g65" x="168" y="624"/><use href="#g5f" x="176" y="624"/><use href="#g53" x="184" y="624"/><use href="#g49" x="192" y="624"/><use href="#g47" x="200" y="624"/><use href="#g54" x="208" y="624"/><use href="#g53" x="216" y="624"/><use href="#g54" x="224" y="624"/><use href="#g50" x="232" y="624"/><use href="#g68" x="440" y="624"/><use href="#g61" x="448" y="624"/><use href="#g6e" x="456" y="624"/><use href="#g64" x="464" y="624"/><use href="#g6c" x="472" y="624"/><use href="#g65" x="480" y="624"/><use href="#g5f" x="488" y="624"/><use href="#g53" x="496" y="624"/><use href="#g49" x="504" y="624"/><use href="#g47" x="512" y="624"/><use href="#g54" x="520" y="624"/><use href="#g53" x="528" y="624"/><use href="#g54" x="536" y="624"/><use href="#g50" x="544" y="624"/>
<use href="#g68" x="128" y="640"/><use href="#g61" x="136" y="640"/><use href="#g6e" x="144" y="640"/><use href="#g64" x="152" y="640"/><use href="#g6c" x="160" y="640"/><use href="#g65" x="168" y="640"/><use href="#g5f" x="176" y="640"/><use href="#g53" x="184" y="640"/><use href="#g49" x="192" y="640"/><use href="#g47" x="200" y="640"/><use href="#g54" x="208" y="640"/><use href="#g53" x="216" y="640"/><use href="#g54" x="224" y="640"/><use href="#g50" x="232" y="640"/>
<use href="#g6b" x="112" y="704"/><use href="#g69" x="120" y="704"/><use href="#g6c" x="128" y="704"/><use href="#g6c" x="136" y="704"/>
<use href="#g68" x="112" y="752"/><use href="#g61" x="120" y="752"/><use href="#g6e" x="128" y="752"/><use href="#g64" x="136" y="752"/><use href="#g6c" x="144" y="752"/><use href="#g65" x="152" y="752"/><use href="#g5f" x="160" y="752"/><use href="#g53" x="168" y="752"/><use href="#g49" x="176" y="752"/><use href="#g47" x="184" y="752"/><use href="#g54" x="192" y="752"/><use href="#g53" x="200" y="752"/><use href="#g54" x="208" y="752"/><use href="#g50" x="216" y="752"/>
<use href="#g68" x="32" y="784"/><use href="#g61" x="40" y="784"/><use href="#g6e" x="48" y="784"/><use href="#g64" x="56" y="784"/><use href="#g6c" x="64" y="784"/><use href="#g65" x="72" y="784"/><use href="#g5f" x="80" y="784"/><use href="#g53" x="88" y="784"/><use href="#g49" x="96" y="784"/><use href="#g47" x="104" y="784"/><use href="#g54" x="112" y="784"/><use href="#g53" x="120" y="784"/><use href="#g54" x="128" y="784"/><use href="#g50" x="136" y="784"/>
<use href="#g6b" x="144" y="816"/><use href="#g69" x="152" y="816"/><use href="#g6c" x="160" y="816"/><use href="#g6c" x="168" y="816"/>
<use href="#g67" x="144" y="832"/><use href="#g70" x="152" y="832"/><use href="#g6d" x="160" y="832"/><use href="#g5f" x="168" y="832"/><use href="#g73" x="176" y="832"/><use href="#g75" x="184" y="832"/><use href="#g73" x="192" y="832"/><use href="#g70" x="200" y="832"/><use href="#g65" x="208" y="832"/><use href="#g6e" x="216" y="832"/><use href="#g64" x="224" y="832"/><use href="#g5f" x="232" y="832"/><use href="#g68" x="240" y="832"/><use href="#g6f" x="248" y="832"/><use href="#g6f" x="256" y="832"/><use href="#g6b" x="264" y="832"/>
<use href="#g5f" x="144" y="864"/><use href="#g5f" x="152" y="864"/><use href="#g47" x="160" y="864"/><use href="#g49" x="168" y="864"/><use href="#g5f" x="176" y="864"/><use href="#g5f" x="184" y="864"/><use href="#g5f" x="192" y="864"/><use href="#g70" x="200" y="864"/><use href="#g6f" x="208" y="864"/><use href="#g6c" x="216" y="864"/><use href="#g6c" x="224" y="864"/>
<use href="#g5f" x="144" y="880"/><use href="#g5f" x="152" y="880"/><use href="#g70" x="160" y="880"/><use href="#g6f" x="168" y="880"/><use href="#g6c" x="176" y="880"/><use href="#g6c" x="184" y="880"/><use href="#g5f" x="192" y="880"/><use href="#g63" x="200" y="880"/><use href="#g68" x="208" y="880"/><use href="#g6b" x="216" y="880"/>
<use href="#g70" x="144" y="896"/><use href="#g6f" x="152" y="896"/><use href="#g6c" x="160" y="896"/><use href="#g6c" x="168" y="896"/>
<use href="#g5f" x="32" y="912"/><use href="#g6e" x="40" y="912"/><use href="#g63" x="48" y="912"/><use href="#g5f" x="56" y="912"/><use href="#g74" x="64" y="912"/><use href="#g69" x="72" y="912"/><use href="#g6d" x="80" y="912"/><use href="#g65" x="88" y="912"/><use href="#g64" x="96" y="912"/><use href="#g5f" x="104" y="912"/><use href="#g77" x="112" y="912"/><use href="#g61" x="120" y="912"/><use href="#g69" x="128" y="912"/><use href="#g74" x="136" y="912"/>
<use href="#g63" x="144" y="928"/><use href="#g68" x="152" y="928"/><use href="#g65" x="160" y="928"/><use href="#g63" x="168" y="928"/><use href="#g6b" x="176" y="928"/><use href="#g5f" x="184" y="928"/><use href="#g6d" x="192" y="928"/><use href="#g6f" x="200" y="928"/><use href="#g75" x="208" y="928"/><use href="#g73" x="216" y="928"/><use href="#g65" x="224" y="928"/><use href="#g5f" x="232" y="928"/><use href="#g61" x="240" y="928"/><use href="#g63" x="248" y="928"/><use href="#g74" x="256" y="928"/><use href="#g69" x="264" y="928"/><use href="#g76" x="272" y="928"/><use href="#g69" x="280" y="928"/><use href="#g74" x="288" y="928"/><use href="#g79" x="296" y="928"/>
<use href="#g5f" x="32" y="944"/><use href="#g6e" x="40" y="944"/><use href="#g63" x="48" y="944"/><use href="#g5f" x="56" y="944"/><use href="#g77" x="64" y="944"/><use href="#g67" x="72" y="944"/><use href="#g65" x="80" y="944"/><use href="#g74" x="88" y="944"/><use href="#g63" x="96" y="944"/><use href="#g68" x="104" y="944"/>
<use href="#g77" x="144" y="960"/><use href="#g67" x="152" y="960"/><use href="#g65" x="160" y="960"/><use href="#g74" x="168" y="960"/><use href="#g63" x="176" y="960"/><use href="#g68" x="184" y="960"/>
<use href="#g53" x="144" y="976"/><use href="#g63" x="152" y="976"/><use href="#g72" x="160" y="976"/><use href="#g65" x="168" y="976"/><use href="#g65" x="176" y="976"/><use href="#g6e" x="184" y="976"/><use href="#g4d" x="192" y="976"/><use href="#g61" x="200" y="976"/><use href="#g6e" x="208" y="976"/><use href="#g61" x="216" y="976"/><use href="#g67" x="224" y="976"/><use href="#g65" x="232" y="976"/><use href="#g72" x="240" y="976"/><use href="#g5f" x="248" y="976"/><use href="#g72" x="256" y="976"/><use href="#g75" x="264" y="976"/><use href="#g6e" x="272" y="976"/>
<use href="#g6d" x="144" y="992"/><use href="#g61" x="152" y="992"/><use href="#g69" x="160" y="992"/><use href="#g6e" x="168" y="992"/>
</g>
</svg>
</div>
</body></html>
